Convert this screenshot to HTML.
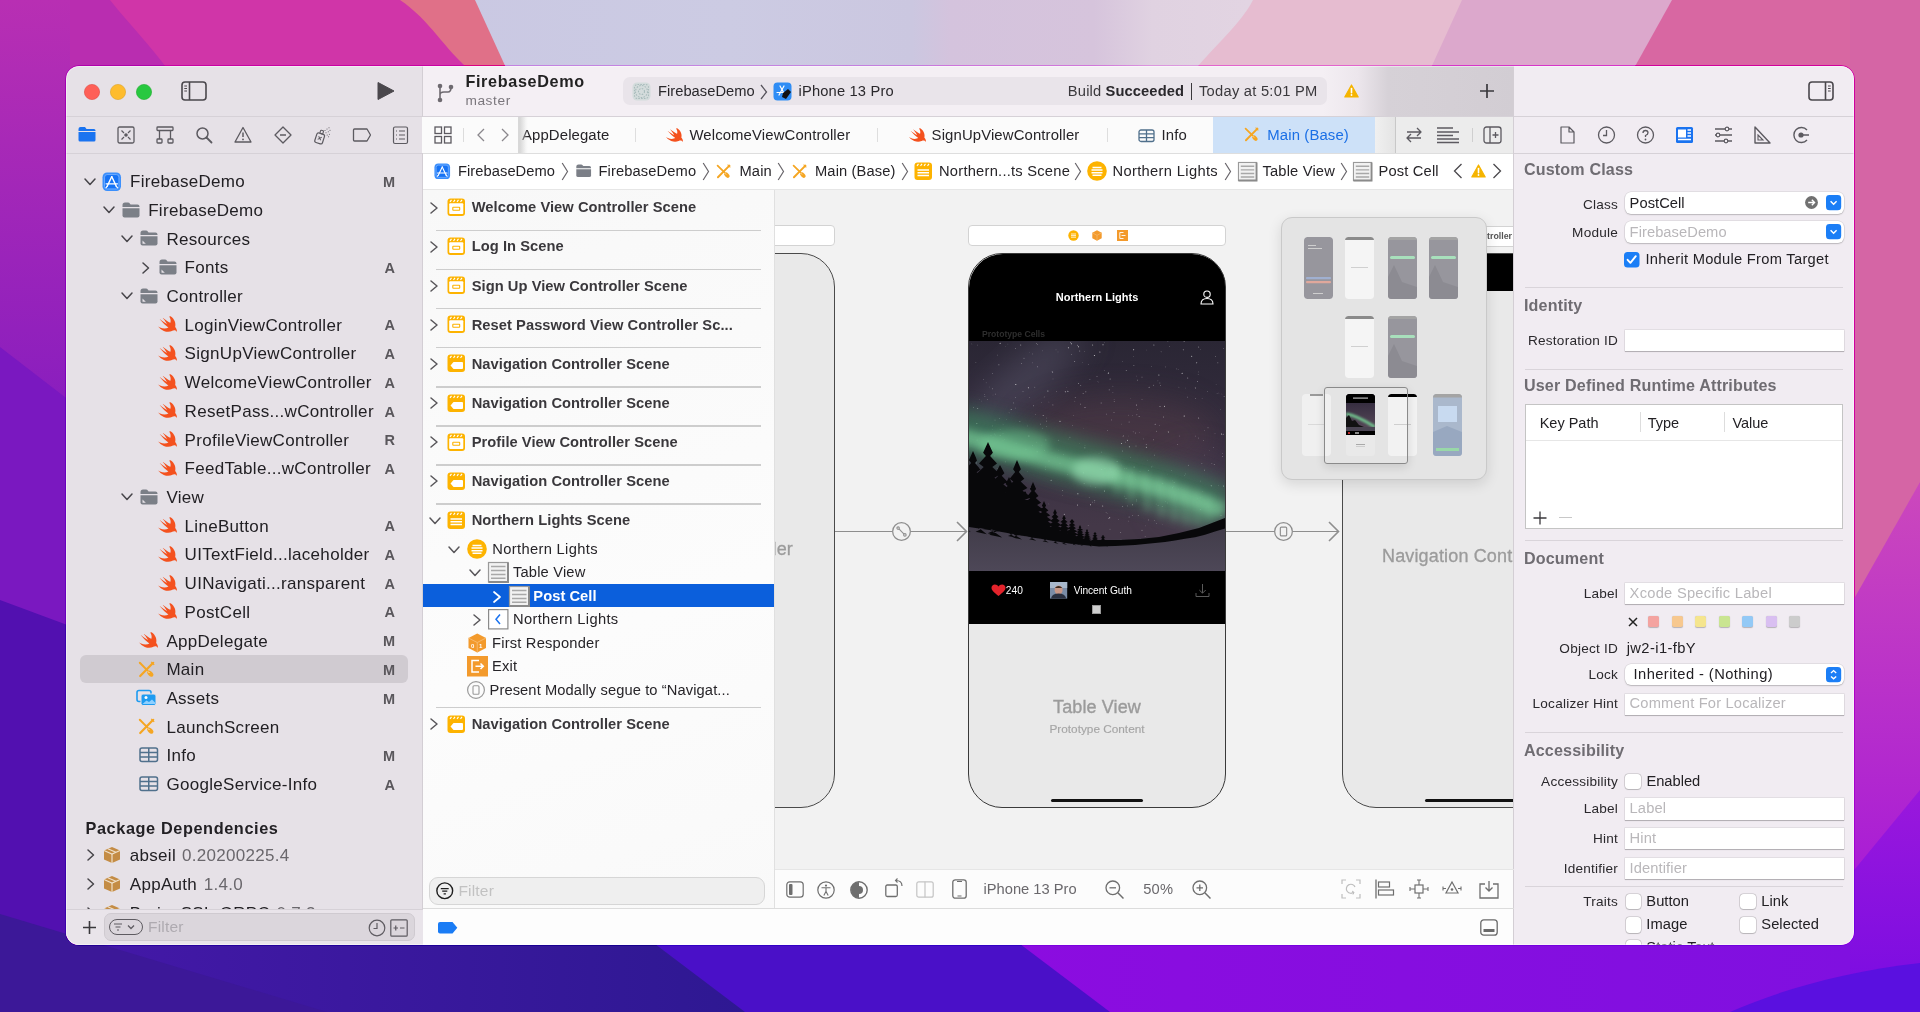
<!DOCTYPE html>
<html><head><meta charset="utf-8"><style>
html,body{margin:0;padding:0}
body{width:1920px;height:1012px;overflow:hidden;position:relative;font-family:"Liberation Sans", sans-serif;}
svg{display:block;overflow:visible}
</style></head><body>
<svg width="1920" height="1012" style="position:absolute;left:0;top:0">
<defs>
<linearGradient id="gl" gradientUnits="userSpaceOnUse" x1="0" y1="0" x2="0" y2="400"><stop offset="0" stop-color="#b82fb3"/><stop offset="1" stop-color="#8a1ebe"/></linearGradient>
<linearGradient id="gr" gradientUnits="userSpaceOnUse" x1="0" y1="482" x2="0" y2="880"><stop offset="0" stop-color="#cc48bc"/><stop offset="1" stop-color="#a81cd6"/></linearGradient><linearGradient id="gv2" gradientUnits="userSpaceOnUse" x1="0" y1="790" x2="0" y2="1000"><stop offset="0" stop-color="#9a18dc"/><stop offset="1" stop-color="#7a0ce2"/></linearGradient>
<linearGradient id="gb" x1="0" y1="0" x2="1" y2="0"><stop offset="0" stop-color="#4418a8"/><stop offset="1" stop-color="#2e1892"/></linearGradient>
<linearGradient id="gv" x1="0" y1="0" x2="1" y2="0"><stop offset="0" stop-color="#7a08e0"/><stop offset="0.5" stop-color="#8c0ce0"/><stop offset="1" stop-color="#8010e0"/></linearGradient>
<linearGradient id="gt" x1="0" y1="0" x2="1" y2="0"><stop offset="0" stop-color="#c6c4e2"/><stop offset="0.38" stop-color="#cccbe3"/><stop offset="0.475" stop-color="#cbc7e0"/><stop offset="0.495" stop-color="#d4c3dd"/><stop offset="0.57" stop-color="#d6c4dc"/><stop offset="0.6" stop-color="#e0d2e1"/><stop offset="0.65" stop-color="#e2d4e2"/><stop offset="1" stop-color="#e0d0e0"/></linearGradient>
</defs>
<rect x="0" y="0" width="1920" height="1012" fill="#8a10e0"/>
<rect x="0" y="0" width="1920" height="70" fill="url(#gt)"/>
<polygon points="0,0 475,0 507,70 0,70" fill="#e07088"/>
<path d="M0,0 L400,0 C430,20 445,50 470,70 L0,70 Z" fill="#d035a8"/>
<path d="M0,0 L110,0 C130,25 150,45 168,70 L0,70 Z" fill="#b92db0"/>
<path d="M1253,0 L1920,0 L1920,70 L1195,70 C1215,45 1240,25 1253,0 Z" fill="#e6bcd0"/>
<polygon points="1462,0 1920,0 1920,70 1430,70" fill="#dca8cc"/>
<polygon points="1672,0 1920,0 1920,70 1633,70" fill="#d867a2"/>
<rect x="0" y="0" width="70" height="1012" fill="url(#gl)"/>
<polygon points="0,347 70,401 70,1012 0,1012" fill="#7a18c0"/>
<polygon points="0,600 70,626 70,1012 0,1012" fill="#5210b0"/>

<rect x="1850" y="0" width="70" height="1012" fill="#d565a5"/>
<polygon points="1920,482 1850,606 1850,1012 1920,1012" fill="url(#gr)"/>
<polygon points="1920,790 1850,875 1850,1012 1920,1012" fill="url(#gv2)"/>

<rect x="70" y="944" width="1780" height="68" fill="url(#gv)"/>
<polygon points="70,944 1020,944 1110,1012 70,1012" fill="#4a10c8"/>
<polygon points="70,944 655,944 745,1012 70,1012" fill="url(#gb)"/>
<polygon points="0,914 327,1012 0,1012" fill="#3c1898"/>
<path d="M1920,963 C1840,972 1775,992 1730,1012 L1920,1012 Z" fill="#5a10e0"/>
</svg><div style="position:absolute;left:0;top:0;width:1920px;height:1012px;clip-path:inset(66px 66px 67px 66px round 13px)"><div style="position:absolute;left:66px;top:66px;width:357px;height:879px;background:#e6e1e7"></div><div style="position:absolute;left:423px;top:66px;width:1091px;height:50px;background:linear-gradient(90deg,#f4eff4 0,#f4eff4 900px,#ece6ec 935px,#d6d1d7 965px,#d2cdd3 100%)"></div><div style="position:absolute;left:1514px;top:66px;width:340px;height:879px;background:#f1ecf2"></div><div style="position:absolute;left:423px;top:117px;width:1091px;height:36px;background:#fbfbfb"></div><div style="position:absolute;left:423px;top:154px;width:1091px;height:35px;background:#ffffff"></div><div style="position:absolute;left:423px;top:190px;width:351px;height:718px;background:linear-gradient(160deg,#f8f8f8,#fcfcfc 60%,#f9f9f9)"></div><div style="position:absolute;left:775px;top:190px;width:739px;height:679px;background:#f2f2f2"></div><div style="position:absolute;left:775px;top:870px;width:739px;height:38px;background:#fcfcfc"></div><div style="position:absolute;left:423px;top:909px;width:1091px;height:36px;background:#fdfdfd"></div><div style="position:absolute;left:66px;top:910px;width:357px;height:35px;background:#e9e4ea"></div><div style="position:absolute;left:66px;top:116px;width:1788px;height:1px;background:#d6d1d7"></div><div style="position:absolute;left:66px;top:153px;width:357px;height:1px;background:#d6d1d7"></div><div style="position:absolute;left:1514px;top:153px;width:340px;height:1px;background:#d6d1d7"></div><div style="position:absolute;left:423px;top:153px;width:1091px;height:1px;background:#dedede"></div><div style="position:absolute;left:423px;top:189px;width:1091px;height:1px;background:#e6e6e6"></div><div style="position:absolute;left:422px;top:66px;width:1px;height:879px;background:#d3ced4"></div><div style="position:absolute;left:1513px;top:66px;width:1px;height:879px;background:#d3ced4"></div><div style="position:absolute;left:774px;top:190px;width:1px;height:718px;background:#e0e0e0"></div><div style="position:absolute;left:775px;top:869px;width:739px;height:1px;background:#e6e6e6"></div><div style="position:absolute;left:423px;top:908px;width:1091px;height:1px;background:#dcdcdc"></div><div style="position:absolute;left:66px;top:909px;width:357px;height:1px;background:#d6d1d7"></div><svg style="position:absolute;left:83.5px;top:83.5px;" width="16" height="16" viewBox="0 0 16 16"><circle cx="8" cy="8" r="7.6" fill="#fe5f57" stroke="#e0443e" stroke-width="0.6"/></svg><svg style="position:absolute;left:109.5px;top:83.5px;" width="16" height="16" viewBox="0 0 16 16"><circle cx="8" cy="8" r="7.6" fill="#febc2e" stroke="#dea123" stroke-width="0.6"/></svg><svg style="position:absolute;left:135.5px;top:83.5px;" width="16" height="16" viewBox="0 0 16 16"><circle cx="8" cy="8" r="7.6" fill="#28c840" stroke="#1dad2b" stroke-width="0.6"/></svg><svg style="position:absolute;left:181px;top:81px;" width="26" height="20" viewBox="0 0 26 20"><rect x="1" y="1" width="24" height="18" rx="3" fill="none" stroke="#4a474c" stroke-width="1.6"/><path d="M8.5,1 L8.5,19" stroke="#4a474c" stroke-width="1.6"/><path d="M3.3,5 L6,5 M3.3,7.5 L6,7.5 M3.3,10 L6,10" stroke="#4a474c" stroke-width="1"/></svg><svg style="position:absolute;left:376px;top:81px;" width="20" height="20" viewBox="0 0 20 20"><path d="M2,1.5 L18,10 L2,18.5 Z" fill="#4a474c" stroke="#4a474c" stroke-width="1" stroke-linejoin="round"/></svg><svg style="position:absolute;left:435px;top:81px;" width="20" height="22" viewBox="0 0 20 22"><g fill="#6e6a70"><circle cx="5" cy="5" r="2.3"/><circle cx="5" cy="19" r="2.3"/><circle cx="16" cy="6" r="2.3"/></g><path d="M5,5 L5,19 M5,14 Q5,11 9,11 L13,11 Q16,11 16,6" fill="none" stroke="#6e6a70" stroke-width="1.6"/></svg><div style="position:absolute;left:465.4px;top:72.94px;font-size:16.2px;line-height:16.2px;color:#222;font-weight:bold;letter-spacing:0.66px;white-space:nowrap;">FirebaseDemo</div><div style="position:absolute;left:465.4px;top:93.80px;font-size:13.7px;line-height:13.7px;color:#7a767c;font-weight:normal;letter-spacing:0.6px;white-space:nowrap;">master</div><div style="position:absolute;left:622.5px;top:77.2px;width:704px;height:28px;background:#e9e4ea;border-radius:7px"></div><svg style="position:absolute;left:632px;top:82px;" width="19" height="19" viewBox="0 0 19 19"><rect x="0.5" y="0.5" width="18" height="18" rx="4.5" fill="#d4dcdc"/><g fill="none" stroke="#a9bcbc" stroke-width="1.1" stroke-dasharray="1.6 1.2"><circle cx="9.5" cy="9.5" r="3"/><circle cx="9.5" cy="9.5" r="6"/><rect x="2.5" y="2.5" width="14" height="14" rx="3"/></g></svg><div style="position:absolute;left:657.9px;top:83.86px;font-size:14.7px;line-height:14.7px;color:#2a282c;font-weight:normal;letter-spacing:0.05px;white-space:nowrap;">FirebaseDemo</div><svg style="position:absolute;left:760px;top:84px;" width="8" height="16" viewBox="0 0 8 16"><path d="M1,1 L6.5,8 L1,15" fill="none" stroke="#55525a" stroke-width="1.3"/></svg><svg style="position:absolute;left:773px;top:82px;" width="20" height="19" viewBox="0 0 20 19"><rect x="0.5" y="0.5" width="18" height="18" rx="4" fill="#2f8df5"/><g stroke="#fff" stroke-width="1.2" stroke-linecap="round"><path d="M7,4 L12,13"/><path d="M11,4 L6,13"/><path d="M4,10.5 L14,10.5"/></g><path d="M10,11 L15,7 L18,10 L13,17 L9,15 Z" fill="#111"/></svg><div style="position:absolute;left:798.5px;top:83.86px;font-size:14.7px;line-height:14.7px;color:#2a282c;font-weight:normal;letter-spacing:0.17px;white-space:nowrap;">iPhone 13 Pro</div><div style="position:absolute;left:1067.8px;top:83.86px;font-size:14.7px;line-height:14.7px;color:#3a383c;font-weight:normal;letter-spacing:0.2px;white-space:nowrap;">Build</div><div style="position:absolute;left:1105.6px;top:83.86px;font-size:14.7px;line-height:14.7px;color:#2a282c;font-weight:bold;letter-spacing:0.1px;white-space:nowrap;">Succeeded</div><div style="position:absolute;left:1191px;top:83px;width:1.3px;height:17px;background:#3a383c"></div><div style="position:absolute;left:1199px;top:83.86px;font-size:14.7px;line-height:14.7px;color:#3a383c;font-weight:normal;letter-spacing:0.26px;white-space:nowrap;">Today at 5:01 PM</div><svg style="position:absolute;left:1344px;top:83.5px;" width="15" height="14" viewBox="0 0 15 14"><path d="M7.5,1 L14.2,13 L0.8,13 Z" fill="#f5b400" stroke="#f5b400" stroke-width="1.2" stroke-linejoin="round"/><path d="M7.5,4.5 L7.5,8.8" stroke="#fff" stroke-width="1.6" stroke-linecap="round"/><circle cx="7.5" cy="11" r="0.9" fill="#fff"/></svg><svg style="position:absolute;left:1479px;top:83px;" width="16" height="16" viewBox="0 0 16 16"><path d="M8,1 L8,15 M1,8 L15,8" stroke="#3a383c" stroke-width="1.7"/></svg><svg style="position:absolute;left:1808px;top:81px;" width="26" height="20" viewBox="0 0 26 20"><rect x="1" y="1" width="24" height="18" rx="3" fill="none" stroke="#4a474c" stroke-width="1.6"/><path d="M17.5,1 L17.5,19" stroke="#4a474c" stroke-width="1.6"/><path d="M20,5 L22.7,5 M20,7.5 L22.7,7.5 M20,10 L22.7,10" stroke="#4a474c" stroke-width="1"/></svg><svg style="position:absolute;left:78.0px;top:126px;" width="19" height="18" viewBox="0 0 19 18"><path d="M0.5,3 Q0.5,1 2.5,1 L7,1 L8.5,3 L16,3 Q17.5,3 17.5,4.5 L17.5,5 L0.5,5 Z M0.5,6 L17.5,6 L17.5,14 Q17.5,15.5 16,15.5 L2,15.5 Q0.5,15.5 0.5,14 Z" fill="#1a73f0"/></svg><svg style="position:absolute;left:117.1px;top:126px;" width="19" height="18" viewBox="0 0 19 18"><rect x="1" y="1" width="16" height="16" rx="1.5" fill="none" stroke="#5c5a60" stroke-width="1.3"/><circle cx="9" cy="9" r="1.8" fill="#5c5a60"/><path d="M4.5,4.5 L7,7 M13.5,4.5 L11,7 M4.5,13.5 L7,11 M13.5,13.5 L11,11" stroke="#5c5a60" stroke-width="1.2"/></svg><svg style="position:absolute;left:156.2px;top:126px;" width="19" height="18" viewBox="0 0 19 18"><rect x="1" y="1" width="16" height="3.5" rx="0.8" fill="none" stroke="#5c5a60" stroke-width="1.3"/><rect x="1" y="13" width="5" height="4" rx="0.8" fill="none" stroke="#5c5a60" stroke-width="1.3"/><rect x="12" y="13" width="5" height="4" rx="0.8" fill="none" stroke="#5c5a60" stroke-width="1.3"/><path d="M3.5,4.5 L3.5,13 M14.5,4.5 L14.5,13" stroke="#5c5a60" stroke-width="1.3"/></svg><svg style="position:absolute;left:195.3px;top:126px;" width="19" height="18" viewBox="0 0 19 18"><circle cx="7.5" cy="7.5" r="5.5" fill="none" stroke="#5c5a60" stroke-width="1.5"/><path d="M11.5,11.5 L16.5,16.5" stroke="#5c5a60" stroke-width="1.8" stroke-linecap="round"/></svg><svg style="position:absolute;left:234.4px;top:126px;" width="19" height="18" viewBox="0 0 19 18"><path d="M9,1.5 L17,16 L1,16 Z" fill="none" stroke="#5c5a60" stroke-width="1.3" stroke-linejoin="round"/><path d="M9,6.5 L9,11" stroke="#5c5a60" stroke-width="1.5"/><circle cx="9" cy="13.4" r="0.9" fill="#5c5a60"/></svg><svg style="position:absolute;left:273.5px;top:126px;" width="19" height="18" viewBox="0 0 19 18"><path d="M9,1 L17,9 L9,17 L1,9 Z" fill="none" stroke="#5c5a60" stroke-width="1.3" stroke-linejoin="round"/><path d="M6,9 L12,9" stroke="#5c5a60" stroke-width="1.5"/></svg><svg style="position:absolute;left:312.6px;top:126px;" width="19" height="18" viewBox="0 0 19 18"><g transform="rotate(18 7 12)"><rect x="2.8" y="7.5" width="8" height="10" rx="1.8" fill="none" stroke="#5c5a60" stroke-width="1.2"/><rect x="5.3" y="4.2" width="3" height="3.3" rx="0.6" fill="none" stroke="#5c5a60" stroke-width="1.1"/><path d="M5.2,10.8 L8.4,14 M8.4,10.8 L5.2,14" stroke="#5c5a60" stroke-width="1"/></g><g fill="#5c5a60"><circle cx="12" cy="4.5" r="0.55"/><circle cx="14" cy="3" r="0.55"/><circle cx="16" cy="1.8" r="0.55"/><circle cx="13" cy="6.8" r="0.55"/><circle cx="15.3" cy="5.8" r="0.55"/><circle cx="17" cy="4.2" r="0.55"/><circle cx="14.2" cy="9" r="0.55"/><circle cx="16.4" cy="8.2" r="0.55"/><circle cx="15.6" cy="10.8" r="0.55"/></g></svg><svg style="position:absolute;left:351.7px;top:126px;" width="19" height="18" viewBox="0 0 19 18"><path d="M1.5,4 Q1.5,3 2.5,3 L15,3 L18.5,9 L15,15 L2.5,15 Q1.5,15 1.5,14 Z" fill="none" stroke="#5c5a60" stroke-width="1.3" stroke-linejoin="round"/></svg><svg style="position:absolute;left:390.8px;top:126px;" width="19" height="18" viewBox="0 0 19 18"><rect x="2.5" y="1" width="14" height="16.5" rx="1.5" fill="none" stroke="#5c5a60" stroke-width="1.2"/><path d="M5,5 L6,5 M8,5 L14,5 M5,9 L6,9 M8,9 L14,9 M5,13 L6,13 M8,13 L14,13" stroke="#5c5a60" stroke-width="1.2"/></svg><svg style="position:absolute;left:434px;top:126px;" width="18" height="18" viewBox="0 0 18 18"><g fill="none" stroke="#5c5a60" stroke-width="1.3"><rect x="1" y="1" width="6.5" height="6.5"/><rect x="10.5" y="1" width="6.5" height="6.5"/><rect x="1" y="10.5" width="6.5" height="6.5"/><rect x="10.5" y="10.5" width="6.5" height="6.5"/></g></svg><div style="position:absolute;left:463px;top:128px;width:1px;height:14px;background:#dcdcdc"></div><svg style="position:absolute;left:476px;top:129px;" width="8" height="14" viewBox="0 0 8 14"><path d="M1,1 L7,7.0 L1,13" fill="none" stroke="#8a878c" stroke-width="1.3" stroke-linecap="round" stroke-linejoin="round"/></svg><svg style="position:absolute;left:502px;top:129px;" width="8" height="14" viewBox="0 0 8 14"><path d="M1,1 L7,7.0 L1,13" fill="none" stroke="#8a878c" stroke-width="1.3" stroke-linecap="round" stroke-linejoin="round"/></svg><div style="position:absolute;left:522px;top:127.59px;font-size:14.9px;line-height:14.9px;color:#262428;font-weight:normal;letter-spacing:0.12px;white-space:nowrap;">AppDelegate</div><div style="position:absolute;left:518px;top:117px;width:10px;height:36px;background:linear-gradient(90deg,#e0e0e0,rgba(251,251,251,0))"></div><div style="position:absolute;left:422px;top:117px;width:97px;height:36px;background:#fbfbfb"></div><svg style="position:absolute;left:434px;top:126px;" width="18" height="18" viewBox="0 0 18 18"><g fill="none" stroke="#5c5a60" stroke-width="1.3"><rect x="1" y="1" width="6.5" height="6.5"/><rect x="10.5" y="1" width="6.5" height="6.5"/><rect x="1" y="10.5" width="6.5" height="6.5"/><rect x="10.5" y="10.5" width="6.5" height="6.5"/></g></svg><div style="position:absolute;left:463px;top:128px;width:1px;height:14px;background:#dcdcdc"></div><svg style="position:absolute;left:476px;top:128px;" width="10" height="14" viewBox="0 0 10 14"><path d="M8,1 L2,7 L8,13" fill="none" stroke="#8a878c" stroke-width="1.3"/></svg><svg style="position:absolute;left:500px;top:128px;" width="10" height="14" viewBox="0 0 10 14"><path d="M2,1 L8,7 L2,13" fill="none" stroke="#8a878c" stroke-width="1.3"/></svg><div style="position:absolute;left:518px;top:117px;width:1.5px;height:36px;background:#d8d8d8"></div><div style="position:absolute;left:519.5px;top:117px;width:6px;height:36px;background:linear-gradient(90deg,rgba(0,0,0,0.06),rgba(0,0,0,0))"></div><div style="position:absolute;left:634.5px;top:128px;width:1px;height:14px;background:#dedede"></div><div style="position:absolute;left:877.3px;top:128px;width:1px;height:14px;background:#dedede"></div><div style="position:absolute;left:1107px;top:128px;width:1px;height:14px;background:#dedede"></div><svg style="position:absolute;left:666px;top:128px;" width="17" height="14" preserveAspectRatio="none" viewBox="2 3 17.5 16.3"><path d="M13.543 3.203c3.812 2.594 5.156 7.545 4.258 11.016.047.07.103.145.15.215 2.014 2.508 1.46 5.156 1.21 4.672-1.05-2.046-2.99-1.53-3.977-1.014-.09.047-.18.094-.27.141l-.02.02c-2.04 1.08-4.77 1.17-7.525-.012a12.085 12.085 0 0 1-5.477-4.678c.63.467 1.305.873 2.004 1.215 2.85 1.332 5.686 1.229 7.686.004-2.84-2.193-5.265-5.061-7.059-7.37-.375-.378-.655-.85-.934-1.28 2.15 1.967 5.561 4.448 6.79 5.138C8.822 8.298 6.503 4.898 5.82 4.24c2.148 1.896 5.156 4.35 7.365 5.595.045.024.097.056.143.076.045-.129.09-.26.127-.389.52-1.86.074-3.97-1.158-5.943z" fill="#f4511e"/></svg><div style="position:absolute;left:689.4px;top:127.59px;font-size:14.9px;line-height:14.9px;color:#262428;font-weight:normal;letter-spacing:0.12px;white-space:nowrap;">WelcomeViewController</div><svg style="position:absolute;left:909px;top:128px;" width="17" height="14" preserveAspectRatio="none" viewBox="2 3 17.5 16.3"><path d="M13.543 3.203c3.812 2.594 5.156 7.545 4.258 11.016.047.07.103.145.15.215 2.014 2.508 1.46 5.156 1.21 4.672-1.05-2.046-2.99-1.53-3.977-1.014-.09.047-.18.094-.27.141l-.02.02c-2.04 1.08-4.77 1.17-7.525-.012a12.085 12.085 0 0 1-5.477-4.678c.63.467 1.305.873 2.004 1.215 2.85 1.332 5.686 1.229 7.686.004-2.84-2.193-5.265-5.061-7.059-7.37-.375-.378-.655-.85-.934-1.28 2.15 1.967 5.561 4.448 6.79 5.138C8.822 8.298 6.503 4.898 5.82 4.24c2.148 1.896 5.156 4.35 7.365 5.595.045.024.097.056.143.076.045-.129.09-.26.127-.389.52-1.86.074-3.97-1.158-5.943z" fill="#f4511e"/></svg><div style="position:absolute;left:931.6px;top:127.59px;font-size:14.9px;line-height:14.9px;color:#262428;font-weight:normal;letter-spacing:0.12px;white-space:nowrap;">SignUpViewController</div><svg style="position:absolute;left:1138px;top:128.5px;" width="17" height="13.5" viewBox="0 0 17 13.5"><rect x="1" y="1" width="15" height="11.5" rx="2" fill="none" stroke="#50708c" stroke-width="1.3"/><path d="M1,4.83 L16,4.83 M1,8.67 L16,8.67 M8.50,1 L8.50,12.5" stroke="#50708c" stroke-width="1.3"/></svg><div style="position:absolute;left:1161.5px;top:127.59px;font-size:14.9px;line-height:14.9px;color:#262428;font-weight:normal;letter-spacing:0.12px;white-space:nowrap;">Info</div><div style="position:absolute;left:1213px;top:117px;width:161.5px;height:36px;background:#cde1f8"></div><svg style="position:absolute;left:1244px;top:127px;" width="15" height="15" viewBox="0 0 17 17"><path d="M1.8,1.8 L9.6,9.6" stroke="#f5a623" stroke-width="2" stroke-linecap="round"/><path d="M15.2,1.8 L2.2,15" stroke="#f5a623" stroke-width="2.2" stroke-linecap="round"/><path d="M13.2,0.8 L16.2,3.8" stroke="#f5a623" stroke-width="1.2"/><ellipse cx="12.3" cy="12.6" rx="3.6" ry="2.3" transform="rotate(45 12.3 12.6)" fill="#f5a623"/><path d="M10,10.5 L11.3,11.8" stroke="#fff" stroke-width="0.9"/></svg><div style="position:absolute;left:1267.3px;top:127.59px;font-size:14.9px;line-height:14.9px;color:#1a6fe6;font-weight:normal;letter-spacing:0.12px;white-space:nowrap;">Main (Base)</div><div style="position:absolute;left:1374.5px;top:117px;width:20.5px;height:36px;background:linear-gradient(90deg,#f0f0f0,#e4e4e4)"></div><div style="position:absolute;left:1394.5px;top:117px;width:1.3px;height:36px;background:#c8c8c8"></div><div style="position:absolute;left:1396px;top:117px;width:117px;height:36px;background:#ececec"></div><svg style="position:absolute;left:1405px;top:126px;" width="18" height="18" viewBox="0 0 18 18"><path d="M2,6 L16,6 M12,2 L16,6 L12,10 M16,12 L2,12 M6,8 L2,12 L6,16" fill="none" stroke="#5c5a60" stroke-width="1.3" stroke-linejoin="round"/></svg><svg style="position:absolute;left:1436px;top:126px;" width="24" height="18" viewBox="0 0 24 18"><path d="M1,2 L17,2 M1,6 L23,6 M1,9.5 L17,9.5 M1,13 L23,13 M1,16.5 L23,16.5" stroke="#5c5a60" stroke-width="1.3"/></svg><div style="position:absolute;left:1472px;top:128px;width:1px;height:14px;background:#cfcfcf"></div><svg style="position:absolute;left:1483px;top:126px;" width="19" height="18" viewBox="0 0 19 18"><rect x="1" y="1" width="17" height="16" rx="2.5" fill="none" stroke="#5c5a60" stroke-width="1.3"/><path d="M7,1 L7,17 M12.5,6 L12.5,12 M9.5,9 L15.5,9" stroke="#5c5a60" stroke-width="1.3"/></svg><svg style="position:absolute;left:1557.5px;top:126px;" width="19" height="18" viewBox="0 0 19 18"><path d="M3,1 L11,1 L16,6 L16,17 L3,17 Z M11,1 L11,6 L16,6" fill="none" stroke="#5c5a60" stroke-width="1.2" stroke-linejoin="round"/></svg><svg style="position:absolute;left:1596.5px;top:126px;" width="19" height="18" viewBox="0 0 19 18"><circle cx="9.5" cy="9" r="8" fill="none" stroke="#5c5a60" stroke-width="1.3"/><path d="M9.5,4 L9.5,9.5 L6,9.5" fill="none" stroke="#5c5a60" stroke-width="1.3"/></svg><svg style="position:absolute;left:1635.5px;top:126px;" width="19" height="18" viewBox="0 0 19 18"><circle cx="9.5" cy="9" r="8" fill="none" stroke="#5c5a60" stroke-width="1.3"/><path d="M7,7 Q7,4.5 9.5,4.5 Q12,4.5 12,6.8 Q12,8.5 9.5,9.5 L9.5,11" fill="none" stroke="#5c5a60" stroke-width="1.3"/><circle cx="9.5" cy="13.5" r="0.9" fill="#5c5a60"/></svg><svg style="position:absolute;left:1674.5px;top:126px;" width="19" height="18" viewBox="0 0 19 18"><rect x="1" y="1" width="17" height="16" rx="1.5" fill="#1a73f0"/><rect x="3" y="3.5" width="8" height="8" fill="#fff"/><path d="M12.5,4 L16,4 M12.5,7 L16,7 M12.5,10 L16,10 M3,13.5 L16,13.5" stroke="#fff" stroke-width="1.3"/></svg><svg style="position:absolute;left:1713.5px;top:126px;" width="19" height="18" viewBox="0 0 19 18"><path d="M1,3 L18,3 M1,9 L18,9 M1,15 L18,15" stroke="#5c5a60" stroke-width="1.3"/><g fill="#f1ecf2" stroke="#5c5a60" stroke-width="1.2"><circle cx="13" cy="3" r="1.8"/><circle cx="4" cy="9" r="1.8"/><circle cx="12" cy="15" r="1.8"/></g></svg><svg style="position:absolute;left:1752.5px;top:126px;" width="19" height="18" viewBox="0 0 19 18"><path d="M2,1 L17,17 L2,17 Z" fill="none" stroke="#5c5a60" stroke-width="1.4" stroke-linejoin="round"/><path d="M5,9 L10,14 L5,14 Z" fill="none" stroke="#5c5a60" stroke-width="1.1"/></svg><svg style="position:absolute;left:1791.5px;top:126px;" width="19" height="18" viewBox="0 0 19 18"><path d="M15,4 A7.5,7.5 0 1,0 15,14" fill="none" stroke="#5c5a60" stroke-width="1.4"/><circle cx="9" cy="9" r="2.6" fill="#5c5a60"/><path d="M9,9 L17,9" stroke="#5c5a60" stroke-width="1.4"/></svg><div style="position:absolute;left:80px;top:655px;width:328px;height:28px;background:#d0cbd1;border-radius:6px"></div><svg style="position:absolute;left:84.0px;top:177.5px;" width="12" height="7.5" viewBox="0 0 12 7.5"><path d="M1,1 L6.0,6.5 L11,1" fill="none" stroke="#47454a" stroke-width="1.5" stroke-linecap="round" stroke-linejoin="round"/></svg><svg style="position:absolute;left:102px;top:171.5px;" width="19.5" height="19.5" viewBox="0 0 19 19"><rect x="0.5" y="0.5" width="18" height="18" rx="4.5" fill="#3b8ffc"/><rect x="2.5" y="2.5" width="14" height="14" rx="2.5" fill="#1673f5" stroke="#7fb6ff" stroke-width="0.8"/><g stroke="#fff" stroke-width="1.3" stroke-linecap="round" fill="none"><path d="M9.5,4.5 L5,14"/><path d="M9.5,4.5 L14,14"/><path d="M4,11.5 L15,11.5"/><path d="M5,14 L4,15.2 M14,14 L15,15.2"/></g></svg><div style="position:absolute;left:130.0px;top:173.21px;font-size:17px;line-height:17px;color:#222024;font-weight:normal;letter-spacing:0.3px;white-space:nowrap;">FirebaseDemo</div><div style="position:absolute;right:1525px;top:174.83px;font-size:14.5px;line-height:14.5px;color:#5a575c;font-weight:bold;letter-spacing:0px;white-space:nowrap;">M</div><svg style="position:absolute;left:102.5px;top:206.21px;" width="12" height="7.5" viewBox="0 0 12 7.5"><path d="M1,1 L6.0,6.5 L11,1" fill="none" stroke="#47454a" stroke-width="1.5" stroke-linecap="round" stroke-linejoin="round"/></svg><svg style="position:absolute;left:120.5px;top:201.71px;" width="19" height="16" preserveAspectRatio="none" viewBox="0 0 19 16"><path d="M1.5,3 Q1.5,0.5 4,0.5 L7,0.5 Q8.2,0.5 9,1.8 L9.6,2.4 L16.5,2.4 Q18.5,2.4 18.5,4.5 L18.5,4.9 L1.5,4.9 Z" fill="#7b7f87"/><path d="M1.5,6.3 L18.5,6.3 L18.5,13.5 Q18.5,15.5 16.5,15.5 L3.5,15.5 Q1.5,15.5 1.5,13.5 Z" fill="#7b7f87"/></svg><div style="position:absolute;left:148.2px;top:201.92px;font-size:17px;line-height:17px;color:#222024;font-weight:normal;letter-spacing:0.3px;white-space:nowrap;">FirebaseDemo</div><svg style="position:absolute;left:121.0px;top:234.92000000000002px;" width="12" height="7.5" viewBox="0 0 12 7.5"><path d="M1,1 L6.0,6.5 L11,1" fill="none" stroke="#47454a" stroke-width="1.5" stroke-linecap="round" stroke-linejoin="round"/></svg><svg style="position:absolute;left:139.0px;top:230.42000000000002px;" width="19" height="16" preserveAspectRatio="none" viewBox="0 0 19 16"><path d="M1.5,3 Q1.5,0.5 4,0.5 L7,0.5 Q8.2,0.5 9,1.8 L9.6,2.4 L16.5,2.4 Q18.5,2.4 18.5,4.5 L18.5,4.9 L1.5,4.9 Z" fill="#7b7f87"/><path d="M1.5,6.3 L18.5,6.3 L18.5,13.5 Q18.5,15.5 16.5,15.5 L3.5,15.5 Q1.5,15.5 1.5,13.5 Z" fill="#7b7f87"/><path d="M3.5,10.5 L6.8,13.8 L3.5,13.8 Z" fill="#e6e1e7"/></svg><div style="position:absolute;left:166.4px;top:230.63px;font-size:17px;line-height:17px;color:#222024;font-weight:normal;letter-spacing:0.3px;white-space:nowrap;">Resources</div><svg style="position:absolute;left:142px;top:261.63px;" width="7.5" height="12" viewBox="0 0 7.5 12"><path d="M1,1 L6.5,6.0 L1,11" fill="none" stroke="#47454a" stroke-width="1.5" stroke-linecap="round" stroke-linejoin="round"/></svg><svg style="position:absolute;left:157.5px;top:259.13px;" width="19" height="16" preserveAspectRatio="none" viewBox="0 0 19 16"><path d="M1.5,3 Q1.5,0.5 4,0.5 L7,0.5 Q8.2,0.5 9,1.8 L9.6,2.4 L16.5,2.4 Q18.5,2.4 18.5,4.5 L18.5,4.9 L1.5,4.9 Z" fill="#7b7f87"/><path d="M1.5,6.3 L18.5,6.3 L18.5,13.5 Q18.5,15.5 16.5,15.5 L3.5,15.5 Q1.5,15.5 1.5,13.5 Z" fill="#7b7f87"/><path d="M3.5,10.5 L6.8,13.8 L3.5,13.8 Z" fill="#e6e1e7"/></svg><div style="position:absolute;left:184.6px;top:259.34px;font-size:17px;line-height:17px;color:#222024;font-weight:normal;letter-spacing:0.3px;white-space:nowrap;">Fonts</div><div style="position:absolute;right:1525px;top:260.96px;font-size:14.5px;line-height:14.5px;color:#5a575c;font-weight:bold;letter-spacing:0px;white-space:nowrap;">A</div><svg style="position:absolute;left:121.0px;top:292.34000000000003px;" width="12" height="7.5" viewBox="0 0 12 7.5"><path d="M1,1 L6.0,6.5 L11,1" fill="none" stroke="#47454a" stroke-width="1.5" stroke-linecap="round" stroke-linejoin="round"/></svg><svg style="position:absolute;left:139.0px;top:287.84000000000003px;" width="19" height="16" preserveAspectRatio="none" viewBox="0 0 19 16"><path d="M1.5,3 Q1.5,0.5 4,0.5 L7,0.5 Q8.2,0.5 9,1.8 L9.6,2.4 L16.5,2.4 Q18.5,2.4 18.5,4.5 L18.5,4.9 L1.5,4.9 Z" fill="#7b7f87"/><path d="M1.5,6.3 L18.5,6.3 L18.5,13.5 Q18.5,15.5 16.5,15.5 L3.5,15.5 Q1.5,15.5 1.5,13.5 Z" fill="#7b7f87"/><path d="M3.5,10.5 L6.8,13.8 L3.5,13.8 Z" fill="#e6e1e7"/></svg><div style="position:absolute;left:166.4px;top:288.05px;font-size:17px;line-height:17px;color:#222024;font-weight:normal;letter-spacing:0.3px;white-space:nowrap;">Controller</div><svg style="position:absolute;left:157.5px;top:316.25px;" width="19" height="16" preserveAspectRatio="none" viewBox="2 3 17.5 16.3"><path d="M13.543 3.203c3.812 2.594 5.156 7.545 4.258 11.016.047.07.103.145.15.215 2.014 2.508 1.46 5.156 1.21 4.672-1.05-2.046-2.99-1.53-3.977-1.014-.09.047-.18.094-.27.141l-.02.02c-2.04 1.08-4.77 1.17-7.525-.012a12.085 12.085 0 0 1-5.477-4.678c.63.467 1.305.873 2.004 1.215 2.85 1.332 5.686 1.229 7.686.004-2.84-2.193-5.265-5.061-7.059-7.37-.375-.378-.655-.85-.934-1.28 2.15 1.967 5.561 4.448 6.79 5.138C8.822 8.298 6.503 4.898 5.82 4.24c2.148 1.896 5.156 4.35 7.365 5.595.045.024.097.056.143.076.045-.129.09-.26.127-.389.52-1.86.074-3.97-1.158-5.943z" fill="#f4511e"/></svg><div style="position:absolute;left:184.6px;top:316.76px;font-size:17px;line-height:17px;color:#222024;font-weight:normal;letter-spacing:0.3px;white-space:nowrap;">LoginViewController</div><div style="position:absolute;right:1525px;top:318.38px;font-size:14.5px;line-height:14.5px;color:#5a575c;font-weight:bold;letter-spacing:0px;white-space:nowrap;">A</div><svg style="position:absolute;left:157.5px;top:344.96px;" width="19" height="16" preserveAspectRatio="none" viewBox="2 3 17.5 16.3"><path d="M13.543 3.203c3.812 2.594 5.156 7.545 4.258 11.016.047.07.103.145.15.215 2.014 2.508 1.46 5.156 1.21 4.672-1.05-2.046-2.99-1.53-3.977-1.014-.09.047-.18.094-.27.141l-.02.02c-2.04 1.08-4.77 1.17-7.525-.012a12.085 12.085 0 0 1-5.477-4.678c.63.467 1.305.873 2.004 1.215 2.85 1.332 5.686 1.229 7.686.004-2.84-2.193-5.265-5.061-7.059-7.37-.375-.378-.655-.85-.934-1.28 2.15 1.967 5.561 4.448 6.79 5.138C8.822 8.298 6.503 4.898 5.82 4.24c2.148 1.896 5.156 4.35 7.365 5.595.045.024.097.056.143.076.045-.129.09-.26.127-.389.52-1.86.074-3.97-1.158-5.943z" fill="#f4511e"/></svg><div style="position:absolute;left:184.6px;top:345.47px;font-size:17px;line-height:17px;color:#222024;font-weight:normal;letter-spacing:0.3px;white-space:nowrap;">SignUpViewController</div><div style="position:absolute;right:1525px;top:347.09px;font-size:14.5px;line-height:14.5px;color:#5a575c;font-weight:bold;letter-spacing:0px;white-space:nowrap;">A</div><svg style="position:absolute;left:157.5px;top:373.67px;" width="19" height="16" preserveAspectRatio="none" viewBox="2 3 17.5 16.3"><path d="M13.543 3.203c3.812 2.594 5.156 7.545 4.258 11.016.047.07.103.145.15.215 2.014 2.508 1.46 5.156 1.21 4.672-1.05-2.046-2.99-1.53-3.977-1.014-.09.047-.18.094-.27.141l-.02.02c-2.04 1.08-4.77 1.17-7.525-.012a12.085 12.085 0 0 1-5.477-4.678c.63.467 1.305.873 2.004 1.215 2.85 1.332 5.686 1.229 7.686.004-2.84-2.193-5.265-5.061-7.059-7.37-.375-.378-.655-.85-.934-1.28 2.15 1.967 5.561 4.448 6.79 5.138C8.822 8.298 6.503 4.898 5.82 4.24c2.148 1.896 5.156 4.35 7.365 5.595.045.024.097.056.143.076.045-.129.09-.26.127-.389.52-1.86.074-3.97-1.158-5.943z" fill="#f4511e"/></svg><div style="position:absolute;left:184.6px;top:374.18px;font-size:17px;line-height:17px;color:#222024;font-weight:normal;letter-spacing:0.3px;white-space:nowrap;">WelcomeViewController</div><div style="position:absolute;right:1525px;top:375.80px;font-size:14.5px;line-height:14.5px;color:#5a575c;font-weight:bold;letter-spacing:0px;white-space:nowrap;">A</div><svg style="position:absolute;left:157.5px;top:402.38px;" width="19" height="16" preserveAspectRatio="none" viewBox="2 3 17.5 16.3"><path d="M13.543 3.203c3.812 2.594 5.156 7.545 4.258 11.016.047.07.103.145.15.215 2.014 2.508 1.46 5.156 1.21 4.672-1.05-2.046-2.99-1.53-3.977-1.014-.09.047-.18.094-.27.141l-.02.02c-2.04 1.08-4.77 1.17-7.525-.012a12.085 12.085 0 0 1-5.477-4.678c.63.467 1.305.873 2.004 1.215 2.85 1.332 5.686 1.229 7.686.004-2.84-2.193-5.265-5.061-7.059-7.37-.375-.378-.655-.85-.934-1.28 2.15 1.967 5.561 4.448 6.79 5.138C8.822 8.298 6.503 4.898 5.82 4.24c2.148 1.896 5.156 4.35 7.365 5.595.045.024.097.056.143.076.045-.129.09-.26.127-.389.52-1.86.074-3.97-1.158-5.943z" fill="#f4511e"/></svg><div style="position:absolute;left:184.6px;top:402.89px;font-size:17px;line-height:17px;color:#222024;font-weight:normal;letter-spacing:0.3px;white-space:nowrap;">ResetPass...wController</div><div style="position:absolute;right:1525px;top:404.51px;font-size:14.5px;line-height:14.5px;color:#5a575c;font-weight:bold;letter-spacing:0px;white-space:nowrap;">A</div><svg style="position:absolute;left:157.5px;top:431.09px;" width="19" height="16" preserveAspectRatio="none" viewBox="2 3 17.5 16.3"><path d="M13.543 3.203c3.812 2.594 5.156 7.545 4.258 11.016.047.07.103.145.15.215 2.014 2.508 1.46 5.156 1.21 4.672-1.05-2.046-2.99-1.53-3.977-1.014-.09.047-.18.094-.27.141l-.02.02c-2.04 1.08-4.77 1.17-7.525-.012a12.085 12.085 0 0 1-5.477-4.678c.63.467 1.305.873 2.004 1.215 2.85 1.332 5.686 1.229 7.686.004-2.84-2.193-5.265-5.061-7.059-7.37-.375-.378-.655-.85-.934-1.28 2.15 1.967 5.561 4.448 6.79 5.138C8.822 8.298 6.503 4.898 5.82 4.24c2.148 1.896 5.156 4.35 7.365 5.595.045.024.097.056.143.076.045-.129.09-.26.127-.389.52-1.86.074-3.97-1.158-5.943z" fill="#f4511e"/></svg><div style="position:absolute;left:184.6px;top:431.60px;font-size:17px;line-height:17px;color:#222024;font-weight:normal;letter-spacing:0.3px;white-space:nowrap;">ProfileViewController</div><div style="position:absolute;right:1525px;top:433.22px;font-size:14.5px;line-height:14.5px;color:#5a575c;font-weight:bold;letter-spacing:0px;white-space:nowrap;">R</div><svg style="position:absolute;left:157.5px;top:459.8px;" width="19" height="16" preserveAspectRatio="none" viewBox="2 3 17.5 16.3"><path d="M13.543 3.203c3.812 2.594 5.156 7.545 4.258 11.016.047.07.103.145.15.215 2.014 2.508 1.46 5.156 1.21 4.672-1.05-2.046-2.99-1.53-3.977-1.014-.09.047-.18.094-.27.141l-.02.02c-2.04 1.08-4.77 1.17-7.525-.012a12.085 12.085 0 0 1-5.477-4.678c.63.467 1.305.873 2.004 1.215 2.85 1.332 5.686 1.229 7.686.004-2.84-2.193-5.265-5.061-7.059-7.37-.375-.378-.655-.85-.934-1.28 2.15 1.967 5.561 4.448 6.79 5.138C8.822 8.298 6.503 4.898 5.82 4.24c2.148 1.896 5.156 4.35 7.365 5.595.045.024.097.056.143.076.045-.129.09-.26.127-.389.52-1.86.074-3.97-1.158-5.943z" fill="#f4511e"/></svg><div style="position:absolute;left:184.6px;top:460.31px;font-size:17px;line-height:17px;color:#222024;font-weight:normal;letter-spacing:0.3px;white-space:nowrap;">FeedTable...wController</div><div style="position:absolute;right:1525px;top:461.93px;font-size:14.5px;line-height:14.5px;color:#5a575c;font-weight:bold;letter-spacing:0px;white-space:nowrap;">A</div><svg style="position:absolute;left:121.0px;top:493.31px;" width="12" height="7.5" viewBox="0 0 12 7.5"><path d="M1,1 L6.0,6.5 L11,1" fill="none" stroke="#47454a" stroke-width="1.5" stroke-linecap="round" stroke-linejoin="round"/></svg><svg style="position:absolute;left:139.0px;top:488.81px;" width="19" height="16" preserveAspectRatio="none" viewBox="0 0 19 16"><path d="M1.5,3 Q1.5,0.5 4,0.5 L7,0.5 Q8.2,0.5 9,1.8 L9.6,2.4 L16.5,2.4 Q18.5,2.4 18.5,4.5 L18.5,4.9 L1.5,4.9 Z" fill="#7b7f87"/><path d="M1.5,6.3 L18.5,6.3 L18.5,13.5 Q18.5,15.5 16.5,15.5 L3.5,15.5 Q1.5,15.5 1.5,13.5 Z" fill="#7b7f87"/><path d="M3.5,10.5 L6.8,13.8 L3.5,13.8 Z" fill="#e6e1e7"/></svg><div style="position:absolute;left:166.4px;top:489.02px;font-size:17px;line-height:17px;color:#222024;font-weight:normal;letter-spacing:0.3px;white-space:nowrap;">View</div><svg style="position:absolute;left:157.5px;top:517.22px;" width="19" height="16" preserveAspectRatio="none" viewBox="2 3 17.5 16.3"><path d="M13.543 3.203c3.812 2.594 5.156 7.545 4.258 11.016.047.07.103.145.15.215 2.014 2.508 1.46 5.156 1.21 4.672-1.05-2.046-2.99-1.53-3.977-1.014-.09.047-.18.094-.27.141l-.02.02c-2.04 1.08-4.77 1.17-7.525-.012a12.085 12.085 0 0 1-5.477-4.678c.63.467 1.305.873 2.004 1.215 2.85 1.332 5.686 1.229 7.686.004-2.84-2.193-5.265-5.061-7.059-7.37-.375-.378-.655-.85-.934-1.28 2.15 1.967 5.561 4.448 6.79 5.138C8.822 8.298 6.503 4.898 5.82 4.24c2.148 1.896 5.156 4.35 7.365 5.595.045.024.097.056.143.076.045-.129.09-.26.127-.389.52-1.86.074-3.97-1.158-5.943z" fill="#f4511e"/></svg><div style="position:absolute;left:184.6px;top:517.73px;font-size:17px;line-height:17px;color:#222024;font-weight:normal;letter-spacing:0.3px;white-space:nowrap;">LineButton</div><div style="position:absolute;right:1525px;top:519.35px;font-size:14.5px;line-height:14.5px;color:#5a575c;font-weight:bold;letter-spacing:0px;white-space:nowrap;">A</div><svg style="position:absolute;left:157.5px;top:545.9300000000001px;" width="19" height="16" preserveAspectRatio="none" viewBox="2 3 17.5 16.3"><path d="M13.543 3.203c3.812 2.594 5.156 7.545 4.258 11.016.047.07.103.145.15.215 2.014 2.508 1.46 5.156 1.21 4.672-1.05-2.046-2.99-1.53-3.977-1.014-.09.047-.18.094-.27.141l-.02.02c-2.04 1.08-4.77 1.17-7.525-.012a12.085 12.085 0 0 1-5.477-4.678c.63.467 1.305.873 2.004 1.215 2.85 1.332 5.686 1.229 7.686.004-2.84-2.193-5.265-5.061-7.059-7.37-.375-.378-.655-.85-.934-1.28 2.15 1.967 5.561 4.448 6.79 5.138C8.822 8.298 6.503 4.898 5.82 4.24c2.148 1.896 5.156 4.35 7.365 5.595.045.024.097.056.143.076.045-.129.09-.26.127-.389.52-1.86.074-3.97-1.158-5.943z" fill="#f4511e"/></svg><div style="position:absolute;left:184.6px;top:546.44px;font-size:17px;line-height:17px;color:#222024;font-weight:normal;letter-spacing:0.3px;white-space:nowrap;">UITextField...laceholder</div><div style="position:absolute;right:1525px;top:548.06px;font-size:14.5px;line-height:14.5px;color:#5a575c;font-weight:bold;letter-spacing:0px;white-space:nowrap;">A</div><svg style="position:absolute;left:157.5px;top:574.6400000000001px;" width="19" height="16" preserveAspectRatio="none" viewBox="2 3 17.5 16.3"><path d="M13.543 3.203c3.812 2.594 5.156 7.545 4.258 11.016.047.07.103.145.15.215 2.014 2.508 1.46 5.156 1.21 4.672-1.05-2.046-2.99-1.53-3.977-1.014-.09.047-.18.094-.27.141l-.02.02c-2.04 1.08-4.77 1.17-7.525-.012a12.085 12.085 0 0 1-5.477-4.678c.63.467 1.305.873 2.004 1.215 2.85 1.332 5.686 1.229 7.686.004-2.84-2.193-5.265-5.061-7.059-7.37-.375-.378-.655-.85-.934-1.28 2.15 1.967 5.561 4.448 6.79 5.138C8.822 8.298 6.503 4.898 5.82 4.24c2.148 1.896 5.156 4.35 7.365 5.595.045.024.097.056.143.076.045-.129.09-.26.127-.389.52-1.86.074-3.97-1.158-5.943z" fill="#f4511e"/></svg><div style="position:absolute;left:184.6px;top:575.15px;font-size:17px;line-height:17px;color:#222024;font-weight:normal;letter-spacing:0.3px;white-space:nowrap;">UINavigati...ransparent</div><div style="position:absolute;right:1525px;top:576.77px;font-size:14.5px;line-height:14.5px;color:#5a575c;font-weight:bold;letter-spacing:0px;white-space:nowrap;">A</div><svg style="position:absolute;left:157.5px;top:603.3500000000001px;" width="19" height="16" preserveAspectRatio="none" viewBox="2 3 17.5 16.3"><path d="M13.543 3.203c3.812 2.594 5.156 7.545 4.258 11.016.047.07.103.145.15.215 2.014 2.508 1.46 5.156 1.21 4.672-1.05-2.046-2.99-1.53-3.977-1.014-.09.047-.18.094-.27.141l-.02.02c-2.04 1.08-4.77 1.17-7.525-.012a12.085 12.085 0 0 1-5.477-4.678c.63.467 1.305.873 2.004 1.215 2.85 1.332 5.686 1.229 7.686.004-2.84-2.193-5.265-5.061-7.059-7.37-.375-.378-.655-.85-.934-1.28 2.15 1.967 5.561 4.448 6.79 5.138C8.822 8.298 6.503 4.898 5.82 4.24c2.148 1.896 5.156 4.35 7.365 5.595.045.024.097.056.143.076.045-.129.09-.26.127-.389.52-1.86.074-3.97-1.158-5.943z" fill="#f4511e"/></svg><div style="position:absolute;left:184.6px;top:603.86px;font-size:17px;line-height:17px;color:#222024;font-weight:normal;letter-spacing:0.3px;white-space:nowrap;">PostCell</div><div style="position:absolute;right:1525px;top:605.48px;font-size:14.5px;line-height:14.5px;color:#5a575c;font-weight:bold;letter-spacing:0px;white-space:nowrap;">A</div><svg style="position:absolute;left:139.0px;top:632.0600000000001px;" width="19" height="16" preserveAspectRatio="none" viewBox="2 3 17.5 16.3"><path d="M13.543 3.203c3.812 2.594 5.156 7.545 4.258 11.016.047.07.103.145.15.215 2.014 2.508 1.46 5.156 1.21 4.672-1.05-2.046-2.99-1.53-3.977-1.014-.09.047-.18.094-.27.141l-.02.02c-2.04 1.08-4.77 1.17-7.525-.012a12.085 12.085 0 0 1-5.477-4.678c.63.467 1.305.873 2.004 1.215 2.85 1.332 5.686 1.229 7.686.004-2.84-2.193-5.265-5.061-7.059-7.37-.375-.378-.655-.85-.934-1.28 2.15 1.967 5.561 4.448 6.79 5.138C8.822 8.298 6.503 4.898 5.82 4.24c2.148 1.896 5.156 4.35 7.365 5.595.045.024.097.056.143.076.045-.129.09-.26.127-.389.52-1.86.074-3.97-1.158-5.943z" fill="#f4511e"/></svg><div style="position:absolute;left:166.4px;top:632.57px;font-size:17px;line-height:17px;color:#222024;font-weight:normal;letter-spacing:0.3px;white-space:nowrap;">AppDelegate</div><div style="position:absolute;right:1525px;top:634.19px;font-size:14.5px;line-height:14.5px;color:#5a575c;font-weight:bold;letter-spacing:0px;white-space:nowrap;">M</div><svg style="position:absolute;left:138.0px;top:660.5699999999999px;" width="17" height="17" viewBox="0 0 17 17"><path d="M1.8,1.8 L9.6,9.6" stroke="#f5a623" stroke-width="2" stroke-linecap="round"/><path d="M15.2,1.8 L2.2,15" stroke="#f5a623" stroke-width="2.2" stroke-linecap="round"/><path d="M13.2,0.8 L16.2,3.8" stroke="#f5a623" stroke-width="1.2"/><ellipse cx="12.3" cy="12.6" rx="3.6" ry="2.3" transform="rotate(45 12.3 12.6)" fill="#f5a623"/><path d="M10,10.5 L11.3,11.8" stroke="#fff" stroke-width="0.9"/></svg><div style="position:absolute;left:166.4px;top:661.28px;font-size:17px;line-height:17px;color:#222024;font-weight:normal;letter-spacing:0.3px;white-space:nowrap;">Main</div><div style="position:absolute;right:1525px;top:662.90px;font-size:14.5px;line-height:14.5px;color:#5a575c;font-weight:bold;letter-spacing:0px;white-space:nowrap;">M</div><svg style="position:absolute;left:135.5px;top:688.78px;" width="21" height="17" viewBox="0 0 21 17"><rect x="1" y="1.5" width="14" height="11" rx="2" fill="none" stroke="#1e9bf0" stroke-width="1.6"/><rect x="5" y="5" width="15" height="11.5" rx="2" fill="#1e9bf0" stroke="#e6e1e7" stroke-width="1"/><circle cx="10" cy="8.6" r="1.5" fill="#fff"/><path d="M6.5,15 L10.5,11.5 L13,13 L16,10.5 L19.5,14 L19.5,15 Z" fill="#8fd0ff"/></svg><div style="position:absolute;left:166.4px;top:689.99px;font-size:17px;line-height:17px;color:#222024;font-weight:normal;letter-spacing:0.3px;white-space:nowrap;">Assets</div><div style="position:absolute;right:1525px;top:691.61px;font-size:14.5px;line-height:14.5px;color:#5a575c;font-weight:bold;letter-spacing:0px;white-space:nowrap;">M</div><svg style="position:absolute;left:138.0px;top:717.99px;" width="17" height="17" viewBox="0 0 17 17"><path d="M1.8,1.8 L9.6,9.6" stroke="#f5a623" stroke-width="2" stroke-linecap="round"/><path d="M15.2,1.8 L2.2,15" stroke="#f5a623" stroke-width="2.2" stroke-linecap="round"/><path d="M13.2,0.8 L16.2,3.8" stroke="#f5a623" stroke-width="1.2"/><ellipse cx="12.3" cy="12.6" rx="3.6" ry="2.3" transform="rotate(45 12.3 12.6)" fill="#f5a623"/><path d="M10,10.5 L11.3,11.8" stroke="#fff" stroke-width="0.9"/></svg><div style="position:absolute;left:166.4px;top:718.70px;font-size:17px;line-height:17px;color:#222024;font-weight:normal;letter-spacing:0.3px;white-space:nowrap;">LaunchScreen</div><svg style="position:absolute;left:138.5px;top:747.4000000000001px;" width="19.5" height="15.5" viewBox="0 0 19.5 15.5"><rect x="1" y="1" width="17.5" height="13.5" rx="2" fill="none" stroke="#50708c" stroke-width="1.5"/><path d="M1,5.50 L18.5,5.50 M1,10.00 L18.5,10.00 M9.75,1 L9.75,14.5" stroke="#50708c" stroke-width="1.5"/></svg><div style="position:absolute;left:166.4px;top:747.41px;font-size:17px;line-height:17px;color:#222024;font-weight:normal;letter-spacing:0.3px;white-space:nowrap;">Info</div><div style="position:absolute;right:1525px;top:749.03px;font-size:14.5px;line-height:14.5px;color:#5a575c;font-weight:bold;letter-spacing:0px;white-space:nowrap;">M</div><svg style="position:absolute;left:138.5px;top:776.11px;" width="19.5" height="15.5" viewBox="0 0 19.5 15.5"><rect x="1" y="1" width="17.5" height="13.5" rx="2" fill="none" stroke="#50708c" stroke-width="1.5"/><path d="M1,5.50 L18.5,5.50 M1,10.00 L18.5,10.00 M9.75,1 L9.75,14.5" stroke="#50708c" stroke-width="1.5"/></svg><div style="position:absolute;left:166.4px;top:776.12px;font-size:17px;line-height:17px;color:#222024;font-weight:normal;letter-spacing:0.3px;white-space:nowrap;">GoogleService-Info</div><div style="position:absolute;right:1525px;top:777.74px;font-size:14.5px;line-height:14.5px;color:#5a575c;font-weight:bold;letter-spacing:0px;white-space:nowrap;">A</div><div style="position:absolute;left:85.5px;top:820.00px;font-size:16.3px;line-height:16.3px;color:#222024;font-weight:bold;letter-spacing:0.6px;white-space:nowrap;">Package Dependencies</div><svg style="position:absolute;left:87px;top:849.2px;" width="7.5" height="12" viewBox="0 0 7.5 12"><path d="M1,1 L6.5,6.0 L1,11" fill="none" stroke="#47454a" stroke-width="1.5" stroke-linecap="round" stroke-linejoin="round"/></svg><svg style="position:absolute;left:103px;top:845.7px;" width="18" height="18" viewBox="0 0 18 18"><path d="M9,1 L17,4.5 L17,13.5 L9,17 L1,13.5 L1,4.5 Z" fill="#c48c45"/><path d="M1,4.5 L9,8 L17,4.5" fill="none" stroke="#f0e0c8" stroke-width="1.2"/><path d="M9,8 L9,17" stroke="#f0e0c8" stroke-width="1.2"/><path d="M4.8,2.8 L12.8,6.3" stroke="#f0e0c8" stroke-width="1.2"/></svg><div style="position:absolute;left:129.75px;top:846.91px;font-size:17px;line-height:17px;color:#222024;font-weight:normal;letter-spacing:0.3px;white-space:nowrap;">abseil</div><div style="position:absolute;left:181.9px;top:846.91px;font-size:17px;line-height:17px;color:#6a676c;font-weight:normal;letter-spacing:0.3px;white-space:nowrap;">0.20200225.4</div><svg style="position:absolute;left:87px;top:878.2px;" width="7.5" height="12" viewBox="0 0 7.5 12"><path d="M1,1 L6.5,6.0 L1,11" fill="none" stroke="#47454a" stroke-width="1.5" stroke-linecap="round" stroke-linejoin="round"/></svg><svg style="position:absolute;left:103px;top:874.7px;" width="18" height="18" viewBox="0 0 18 18"><path d="M9,1 L17,4.5 L17,13.5 L9,17 L1,13.5 L1,4.5 Z" fill="#c48c45"/><path d="M1,4.5 L9,8 L17,4.5" fill="none" stroke="#f0e0c8" stroke-width="1.2"/><path d="M9,8 L9,17" stroke="#f0e0c8" stroke-width="1.2"/><path d="M4.8,2.8 L12.8,6.3" stroke="#f0e0c8" stroke-width="1.2"/></svg><div style="position:absolute;left:129.75px;top:875.91px;font-size:17px;line-height:17px;color:#222024;font-weight:normal;letter-spacing:0.3px;white-space:nowrap;">AppAuth</div><div style="position:absolute;left:203.8px;top:875.91px;font-size:17px;line-height:17px;color:#6a676c;font-weight:normal;letter-spacing:0.3px;white-space:nowrap;">1.4.0</div><svg style="position:absolute;left:87px;top:907.1px;" width="7.5" height="12" viewBox="0 0 7.5 12"><path d="M1,1 L6.5,6.0 L1,11" fill="none" stroke="#47454a" stroke-width="1.5" stroke-linecap="round" stroke-linejoin="round"/></svg><svg style="position:absolute;left:103px;top:903.6px;" width="18" height="18" viewBox="0 0 18 18"><path d="M9,1 L17,4.5 L17,13.5 L9,17 L1,13.5 L1,4.5 Z" fill="#c48c45"/><path d="M1,4.5 L9,8 L17,4.5" fill="none" stroke="#f0e0c8" stroke-width="1.2"/><path d="M9,8 L9,17" stroke="#f0e0c8" stroke-width="1.2"/><path d="M4.8,2.8 L12.8,6.3" stroke="#f0e0c8" stroke-width="1.2"/></svg><div style="position:absolute;left:129.75px;top:904.81px;font-size:17px;line-height:17px;color:#222024;font-weight:normal;letter-spacing:0.3px;white-space:nowrap;">BoringSSL-GRPC</div><div style="position:absolute;left:276.5px;top:904.81px;font-size:17px;line-height:17px;color:#6a676c;font-weight:normal;letter-spacing:0.3px;white-space:nowrap;">0.7.2</div><div style="position:absolute;left:66px;top:909px;width:357px;height:36px;background:#e9e4ea;border-top:1px solid #d6d1d7"></div><svg style="position:absolute;left:82px;top:920px;" width="15" height="15" viewBox="0 0 15 15"><path d="M7.5,1 L7.5,14 M1,7.5 L14,7.5" stroke="#3a383c" stroke-width="1.6"/></svg><div style="position:absolute;left:103.5px;top:913.2px;width:311px;height:28px;background:#dbd6dc;border:1px solid #cfcad0;border-radius:7px;box-sizing:border-box"></div><div style="position:absolute;left:109px;top:919.4px;width:33.5px;height:15.5px;border:1.3px solid #5e5b61;border-radius:8px;box-sizing:border-box"></div><svg style="position:absolute;left:112px;top:922px;" width="28" height="11" viewBox="0 0 28 11"><path d="M2,2 L10,2 M3.5,5 L8.5,5 M5,8 L7,8" stroke="#5e5b61" stroke-width="1.2"/><path d="M16,3.5 L19,6.5 L22,3.5" fill="none" stroke="#5e5b61" stroke-width="1.3"/></svg><div style="position:absolute;left:148px;top:919.38px;font-size:15.5px;line-height:15.5px;color:#aeaab0;font-weight:normal;letter-spacing:0.2px;white-space:nowrap;">Filter</div><svg style="position:absolute;left:367.5px;top:918.5px;" width="18" height="18" viewBox="0 0 18 18"><circle cx="9" cy="9" r="7.8" fill="none" stroke="#5e5b61" stroke-width="1.2"/><path d="M9,4 L9,9.5 L5.5,9.5" fill="none" stroke="#5e5b61" stroke-width="1.2"/></svg><svg style="position:absolute;left:390px;top:918.5px;" width="18" height="18" viewBox="0 0 18 18"><rect x="0.8" y="0.8" width="16.4" height="16.4" rx="1" fill="none" stroke="#5e5b61" stroke-width="1.2"/><path d="M3.5,9 L8,9 M5.75,6.5 L5.75,11.5 M10,9 L14.5,9" stroke="#5e5b61" stroke-width="1.2"/></svg><div style="position:absolute;left:0;top:0;width:1920px;height:1012px;clip-path:inset(190px 407px 143px 775px)"><div style="position:absolute;left:700px;top:225px;width:135px;height:21px;background:#fff;border:1px solid #d3d3d3;border-radius:4px;box-sizing:border-box"></div><div style="position:absolute;left:600px;top:253px;width:235px;height:555px;background:#e9e9e9;border:1.2px solid #4a4a4a;border-radius:34px;box-sizing:border-box"></div><div style="position:absolute;right:1127px;top:540.26px;font-size:18px;line-height:18px;color:#9b9b9b;font-weight:normal;letter-spacing:0.15px;white-space:nowrap;-webkit-text-stroke:0.3px #9b9b9b">Navigation Controller</div><div style="position:absolute;left:835px;top:530.5px;width:131px;height:1.4px;background:#8e8e8e"></div><svg style="position:absolute;left:956px;top:521px;" width="12" height="21" viewBox="0 0 12 21"><path d="M1,1 L10.5,10.5 L1,20" fill="none" stroke="#8e8e8e" stroke-width="1.6"/></svg><div style="position:absolute;left:892px;top:521.5px;width:19px;height:19px;background:#f2f2f2;border-radius:50%"></div><svg style="position:absolute;left:892.2px;top:522px;" width="19" height="19" viewBox="0 0 18 18"><circle cx="9" cy="9" r="8.4" fill="none" stroke="#8e8e8e" stroke-width="1.2"/><circle cx="5.8" cy="5.8" r="1.2" fill="none" stroke="#8e8e8e" stroke-width="1"/><circle cx="12.2" cy="12.2" r="1.2" fill="none" stroke="#8e8e8e" stroke-width="1"/><path d="M6.6,6.6 L11.4,11.4" stroke="#8e8e8e" stroke-width="1"/></svg><div style="position:absolute;left:968px;top:225.3px;width:258px;height:20.8px;background:#fff;border:1px solid #d3d3d3;border-radius:4px;box-sizing:border-box"></div><svg style="position:absolute;left:1067.5px;top:230px;" width="11" height="11" viewBox="0 0 11 11"><circle cx="5.5" cy="5.5" r="5.2" fill="#fdb300"/><path d="M3,4 L8,4 M3,5.6 L8,5.6 M3,7.2 L8,7.2" stroke="#fff" stroke-width="0.8"/></svg><svg style="position:absolute;left:1092px;top:230px;" width="10" height="11" viewBox="0 0 10 11"><path d="M5,0.3 L9.7,2.8 L9.7,8.2 L5,10.7 L0.3,8.2 L0.3,2.8 Z" fill="#f39a2c"/><path d="M0.3,2.8 L5,5.3 L9.7,2.8 M5,5.3 L5,10.7" stroke="#f7c07a" stroke-width="0.6" fill="none"/></svg><svg style="position:absolute;left:1116.5px;top:230px;" width="11" height="11" viewBox="0 0 11 11"><rect x="0" y="0" width="11" height="11" fill="#f39a2c"/><path d="M6.5,2.5 L2.8,2.5 L2.8,8.5 L6.5,8.5 M4.5,5.5 L8.5,5.5" fill="none" stroke="#fff" stroke-width="0.9"/></svg><div style="position:absolute;left:968.7px;top:253.5px;width:257px;height:554.3px;border-radius:34px;overflow:hidden;background:#e9e9e9"><div style="position:absolute;left:0;top:0;width:256px;height:87px;background:#000"></div><svg width="256" height="230" viewBox="0 0 256 230" style="position:absolute;left:0;top:87;overflow:hidden">
<defs>
<linearGradient id="sky" x1="0" y1="0" x2="0" y2="1"><stop offset="0" stop-color="#2a2634"/><stop offset="0.45" stop-color="#362e40"/><stop offset="0.8" stop-color="#443848"/></linearGradient>
<linearGradient id="snow" x1="0" y1="0" x2="0" y2="1"><stop offset="0" stop-color="#403b48"/><stop offset="1" stop-color="#4e4858"/></linearGradient>
<filter id="bl" x="-30%" y="-80%" width="160%" height="260%"><feGaussianBlur stdDeviation="9"/></filter>
<filter id="bl2" x="-20%" y="-50%" width="140%" height="200%"><feGaussianBlur stdDeviation="4"/></filter>
<filter id="bl4" x="-20%" y="-50%" width="140%" height="200%"><feGaussianBlur stdDeviation="1.8"/></filter>
<filter id="bl3" x="-50%" y="-50%" width="200%" height="200%"><feGaussianBlur stdDeviation="16"/></filter>
</defs>
<rect width="256" height="230" fill="url(#sky)"/>
<ellipse cx="55" cy="40" rx="75" ry="22" fill="#5a566c" opacity="0.5" filter="url(#bl3)" transform="rotate(-42 55 40)"/>
<ellipse cx="150" cy="95" rx="100" ry="40" fill="#5a4048" opacity="0.45" filter="url(#bl3)"/>
<ellipse cx="225" cy="150" rx="40" ry="40" fill="#5a4860" opacity="0.4" filter="url(#bl3)"/>
<circle cx="82.9" cy="30.2" r="0.3" fill="#fff" opacity="0.39"/><circle cx="137.2" cy="73.1" r="0.3" fill="#fff" opacity="0.85"/><circle cx="55.0" cy="17.2" r="0.5" fill="#fff" opacity="0.39"/><circle cx="23.2" cy="84.9" r="0.3" fill="#fff" opacity="0.87"/><circle cx="161.4" cy="116.6" r="0.3" fill="#fff" opacity="0.67"/><circle cx="101.6" cy="195.3" r="0.3" fill="#fff" opacity="0.66"/><circle cx="34.1" cy="83.8" r="0.3" fill="#fff" opacity="0.66"/><circle cx="143.4" cy="136.4" r="0.3" fill="#fff" opacity="0.67"/><circle cx="163.6" cy="74.5" r="0.3" fill="#fff" opacity="0.66"/><circle cx="158.5" cy="99.3" r="0.5" fill="#fff" opacity="0.78"/><circle cx="119.2" cy="184.7" r="0.4" fill="#fff" opacity="0.51"/><circle cx="203.4" cy="139.8" r="0.35" fill="#fff" opacity="0.40"/><circle cx="76.9" cy="99.0" r="0.4" fill="#fff" opacity="0.75"/><circle cx="73.7" cy="196.0" r="0.3" fill="#fff" opacity="0.63"/><circle cx="42.2" cy="68.4" r="0.5" fill="#fff" opacity="0.58"/><circle cx="246.3" cy="15.5" r="0.4" fill="#fff" opacity="0.54"/><circle cx="89.6" cy="99.3" r="0.5" fill="#fff" opacity="0.39"/><circle cx="24.0" cy="54.0" r="0.3" fill="#fff" opacity="0.38"/><circle cx="179.6" cy="129.4" r="0.5" fill="#fff" opacity="0.51"/><circle cx="98.8" cy="133.7" r="0.3" fill="#fff" opacity="0.87"/><circle cx="91.0" cy="122.2" r="0.5" fill="#fff" opacity="0.38"/><circle cx="196.7" cy="25.9" r="0.35" fill="#fff" opacity="0.57"/><circle cx="234.7" cy="99.3" r="0.35" fill="#fff" opacity="0.60"/><circle cx="140.7" cy="176.7" r="0.5" fill="#fff" opacity="0.83"/><circle cx="71.3" cy="83.1" r="0.4" fill="#fff" opacity="0.73"/><circle cx="97.4" cy="46.2" r="0.3" fill="#fff" opacity="0.45"/><circle cx="59.4" cy="46.7" r="0.5" fill="#fff" opacity="0.81"/><circle cx="46.7" cy="56.4" r="0.35" fill="#fff" opacity="0.58"/><circle cx="94.5" cy="113.3" r="0.35" fill="#fff" opacity="0.73"/><circle cx="132.0" cy="123.5" r="0.3" fill="#fff" opacity="0.60"/><circle cx="223.0" cy="190.4" r="0.5" fill="#fff" opacity="0.57"/><circle cx="100.9" cy="96.3" r="0.5" fill="#fff" opacity="0.38"/><circle cx="17.2" cy="41.8" r="0.35" fill="#fff" opacity="0.41"/><circle cx="153.8" cy="20.5" r="0.35" fill="#fff" opacity="0.65"/><circle cx="242.9" cy="122.7" r="0.3" fill="#fff" opacity="0.83"/><circle cx="157.2" cy="29.7" r="0.4" fill="#fff" opacity="0.88"/><circle cx="154.2" cy="94.8" r="0.3" fill="#fff" opacity="0.82"/><circle cx="254.2" cy="93.2" r="0.5" fill="#fff" opacity="0.52"/><circle cx="36.9" cy="149.9" r="0.4" fill="#fff" opacity="0.61"/><circle cx="177.2" cy="103.3" r="0.35" fill="#fff" opacity="0.87"/><circle cx="135.2" cy="29.3" r="0.3" fill="#fff" opacity="0.77"/><circle cx="76.3" cy="128.6" r="0.3" fill="#fff" opacity="0.73"/><circle cx="66.8" cy="73.3" r="0.35" fill="#fff" opacity="0.55"/><circle cx="57.0" cy="108.3" r="0.4" fill="#fff" opacity="0.70"/><circle cx="157.0" cy="157.7" r="0.35" fill="#fff" opacity="0.79"/><circle cx="209.5" cy="148.0" r="0.35" fill="#fff" opacity="0.46"/><circle cx="126.2" cy="146.2" r="0.3" fill="#fff" opacity="0.78"/><circle cx="120.9" cy="38.7" r="0.4" fill="#fff" opacity="0.60"/><circle cx="239.9" cy="197.6" r="0.4" fill="#fff" opacity="0.39"/><circle cx="26.2" cy="94.0" r="0.4" fill="#fff" opacity="0.46"/><circle cx="159.8" cy="180.1" r="0.3" fill="#fff" opacity="0.61"/><circle cx="167.2" cy="159.9" r="0.3" fill="#fff" opacity="0.81"/><circle cx="30.7" cy="77.7" r="0.35" fill="#fff" opacity="0.61"/><circle cx="45.7" cy="157.8" r="0.4" fill="#fff" opacity="0.40"/><circle cx="242.2" cy="144.4" r="0.5" fill="#fff" opacity="0.57"/><circle cx="242.4" cy="145.0" r="0.35" fill="#fff" opacity="0.90"/><circle cx="7.1" cy="118.2" r="0.5" fill="#fff" opacity="0.79"/><circle cx="37.4" cy="165.3" r="0.5" fill="#fff" opacity="0.71"/><circle cx="89.7" cy="109.7" r="0.35" fill="#fff" opacity="0.36"/><circle cx="204.6" cy="145.3" r="0.3" fill="#fff" opacity="0.64"/><circle cx="239.0" cy="86.8" r="0.35" fill="#fff" opacity="0.80"/><circle cx="54.0" cy="50.4" r="0.4" fill="#fff" opacity="0.63"/><circle cx="195.5" cy="65.2" r="0.5" fill="#fff" opacity="0.81"/><circle cx="15.6" cy="148.0" r="0.5" fill="#fff" opacity="0.71"/><circle cx="208.7" cy="103.4" r="0.35" fill="#fff" opacity="0.64"/><circle cx="134.0" cy="3.7" r="0.5" fill="#fff" opacity="0.78"/><circle cx="155.8" cy="155.2" r="0.35" fill="#fff" opacity="0.44"/><circle cx="121.2" cy="145.0" r="0.3" fill="#fff" opacity="0.53"/><circle cx="132.7" cy="111.1" r="0.3" fill="#fff" opacity="0.84"/><circle cx="14.5" cy="38.3" r="0.3" fill="#fff" opacity="0.77"/><circle cx="130.0" cy="112.3" r="0.3" fill="#fff" opacity="0.59"/><circle cx="156.8" cy="101.1" r="0.35" fill="#fff" opacity="0.73"/><circle cx="115.8" cy="106.7" r="0.5" fill="#fff" opacity="0.63"/><circle cx="63.4" cy="104.6" r="0.4" fill="#fff" opacity="0.86"/><circle cx="228.5" cy="40.5" r="0.5" fill="#fff" opacity="0.43"/><circle cx="31.1" cy="88.4" r="0.3" fill="#fff" opacity="0.72"/><circle cx="109.7" cy="42.5" r="0.4" fill="#fff" opacity="0.78"/><circle cx="229.6" cy="30.9" r="0.4" fill="#fff" opacity="0.43"/><circle cx="226.0" cy="193.5" r="0.35" fill="#fff" opacity="0.76"/><circle cx="24.1" cy="177.0" r="0.35" fill="#fff" opacity="0.89"/><circle cx="213.1" cy="32.3" r="0.5" fill="#fff" opacity="0.90"/><circle cx="103.4" cy="84.3" r="0.4" fill="#fff" opacity="0.53"/><circle cx="184.9" cy="3.9" r="0.5" fill="#fff" opacity="0.59"/><circle cx="4.6" cy="66.3" r="0.4" fill="#fff" opacity="0.63"/><circle cx="16.5" cy="197.0" r="0.35" fill="#fff" opacity="0.88"/><circle cx="26.8" cy="53.1" r="0.3" fill="#fff" opacity="0.85"/><circle cx="46.5" cy="151.2" r="0.5" fill="#fff" opacity="0.82"/><circle cx="173.0" cy="189.2" r="0.5" fill="#fff" opacity="0.43"/><circle cx="235.3" cy="114.1" r="0.4" fill="#fff" opacity="0.40"/><circle cx="14.7" cy="137.6" r="0.5" fill="#fff" opacity="0.84"/><circle cx="68.8" cy="3.4" r="0.3" fill="#fff" opacity="0.79"/><circle cx="21.4" cy="171.2" r="0.3" fill="#fff" opacity="0.50"/><circle cx="31.1" cy="2.3" r="0.5" fill="#fff" opacity="0.86"/><circle cx="68.6" cy="25.8" r="0.35" fill="#fff" opacity="0.87"/><circle cx="248.1" cy="52.4" r="0.35" fill="#fff" opacity="0.46"/><circle cx="79.9" cy="61.0" r="0.35" fill="#fff" opacity="0.51"/><circle cx="128.0" cy="35.6" r="0.4" fill="#fff" opacity="0.79"/><circle cx="254.6" cy="7.4" r="0.3" fill="#fff" opacity="0.75"/><circle cx="141.1" cy="37.9" r="0.5" fill="#fff" opacity="0.49"/><circle cx="114.4" cy="131.7" r="0.5" fill="#fff" opacity="0.71"/><circle cx="139.8" cy="177.7" r="0.4" fill="#fff" opacity="0.73"/><circle cx="251.5" cy="68.5" r="0.35" fill="#fff" opacity="0.57"/><circle cx="89.0" cy="10.9" r="0.35" fill="#fff" opacity="0.36"/><circle cx="160.1" cy="176.0" r="0.5" fill="#fff" opacity="0.44"/><circle cx="21.6" cy="168.3" r="0.4" fill="#fff" opacity="0.68"/><circle cx="177.3" cy="9.0" r="0.35" fill="#fff" opacity="0.44"/><circle cx="114.1" cy="52.6" r="0.4" fill="#fff" opacity="0.88"/><circle cx="140.1" cy="48.9" r="0.4" fill="#fff" opacity="0.47"/><circle cx="46.8" cy="67.1" r="0.3" fill="#fff" opacity="0.61"/><circle cx="128.7" cy="40.2" r="0.3" fill="#fff" opacity="0.40"/><circle cx="209.2" cy="28.8" r="0.3" fill="#fff" opacity="0.57"/><circle cx="76.7" cy="125.9" r="0.3" fill="#fff" opacity="0.67"/><circle cx="135.5" cy="150.1" r="0.5" fill="#fff" opacity="0.77"/><circle cx="184.5" cy="98.8" r="0.4" fill="#fff" opacity="0.75"/><circle cx="164.7" cy="8.8" r="0.5" fill="#fff" opacity="0.75"/><circle cx="207.9" cy="27.9" r="0.3" fill="#fff" opacity="0.80"/><circle cx="149.5" cy="178.6" r="0.35" fill="#fff" opacity="0.40"/><circle cx="10.7" cy="127.4" r="0.3" fill="#fff" opacity="0.56"/><circle cx="115.6" cy="10.2" r="0.3" fill="#fff" opacity="0.69"/><circle cx="174.3" cy="97.9" r="0.3" fill="#fff" opacity="0.60"/><circle cx="17.9" cy="186.5" r="0.3" fill="#fff" opacity="0.71"/><circle cx="16.9" cy="147.4" r="0.4" fill="#fff" opacity="0.80"/><circle cx="216.6" cy="47.0" r="0.35" fill="#fff" opacity="0.48"/><circle cx="166.4" cy="92.1" r="0.5" fill="#fff" opacity="0.39"/><circle cx="233.1" cy="57.5" r="0.3" fill="#fff" opacity="0.69"/><circle cx="164.5" cy="15.5" r="0.35" fill="#fff" opacity="0.53"/><circle cx="166.8" cy="138.6" r="0.35" fill="#fff" opacity="0.36"/><circle cx="15.5" cy="53.8" r="0.3" fill="#fff" opacity="0.73"/><circle cx="173.0" cy="58.2" r="0.4" fill="#fff" opacity="0.61"/><circle cx="119.4" cy="23.7" r="0.35" fill="#fff" opacity="0.52"/><circle cx="22.0" cy="94.6" r="0.4" fill="#fff" opacity="0.60"/><circle cx="209.9" cy="193.6" r="0.5" fill="#fff" opacity="0.90"/><circle cx="99.0" cy="183.3" r="0.35" fill="#fff" opacity="0.39"/><circle cx="23.1" cy="149.5" r="0.4" fill="#fff" opacity="0.87"/><circle cx="33.9" cy="164.0" r="0.4" fill="#fff" opacity="0.84"/><circle cx="180.1" cy="46.3" r="0.5" fill="#fff" opacity="0.57"/><circle cx="40.7" cy="190.0" r="0.5" fill="#fff" opacity="0.57"/><circle cx="186.2" cy="83.2" r="0.5" fill="#fff" opacity="0.52"/><circle cx="215.1" cy="0.3" r="0.4" fill="#fff" opacity="0.81"/><circle cx="30.7" cy="185.3" r="0.3" fill="#fff" opacity="0.85"/><circle cx="74.2" cy="74.4" r="0.5" fill="#fff" opacity="0.56"/><circle cx="222.7" cy="15.3" r="0.5" fill="#fff" opacity="0.77"/><circle cx="218.7" cy="56.1" r="0.3" fill="#fff" opacity="0.81"/><circle cx="73.1" cy="187.1" r="0.35" fill="#fff" opacity="0.88"/><circle cx="111.7" cy="63.1" r="0.4" fill="#fff" opacity="0.78"/><circle cx="109.5" cy="5.8" r="0.5" fill="#fff" opacity="0.85"/><circle cx="240.8" cy="109.8" r="0.3" fill="#fff" opacity="0.38"/><circle cx="187.5" cy="90.2" r="0.35" fill="#fff" opacity="0.70"/><circle cx="73.3" cy="9.8" r="0.35" fill="#fff" opacity="0.44"/><circle cx="106.2" cy="56.3" r="0.4" fill="#fff" opacity="0.76"/><circle cx="249.9" cy="52.0" r="0.35" fill="#fff" opacity="0.52"/><circle cx="142.7" cy="78.9" r="0.35" fill="#fff" opacity="0.70"/><circle cx="19.2" cy="100.1" r="0.5" fill="#fff" opacity="0.65"/><circle cx="116.0" cy="66.6" r="0.5" fill="#fff" opacity="0.59"/><circle cx="140.2" cy="48.8" r="0.35" fill="#fff" opacity="0.54"/><circle cx="23.3" cy="47.8" r="0.4" fill="#fff" opacity="0.80"/><circle cx="51.7" cy="4.0" r="0.5" fill="#fff" opacity="0.56"/><circle cx="190.9" cy="42.0" r="0.4" fill="#fff" opacity="0.54"/><circle cx="15.9" cy="55.5" r="0.4" fill="#fff" opacity="0.42"/><circle cx="128.9" cy="125.9" r="0.35" fill="#fff" opacity="0.40"/><circle cx="229.6" cy="76.9" r="0.5" fill="#fff" opacity="0.59"/><circle cx="79.9" cy="162.9" r="0.3" fill="#fff" opacity="0.42"/><circle cx="108.9" cy="152.7" r="0.5" fill="#fff" opacity="0.88"/><circle cx="125.4" cy="14.6" r="0.5" fill="#fff" opacity="0.88"/><circle cx="63.6" cy="21.8" r="0.35" fill="#fff" opacity="0.43"/><circle cx="248.8" cy="21.8" r="0.5" fill="#fff" opacity="0.40"/><circle cx="198.9" cy="0.3" r="0.35" fill="#fff" opacity="0.48"/><circle cx="235.5" cy="129.1" r="0.4" fill="#fff" opacity="0.88"/><circle cx="160.4" cy="105.7" r="0.5" fill="#fff" opacity="0.73"/><circle cx="28.7" cy="14.1" r="0.35" fill="#fff" opacity="0.56"/><circle cx="57.2" cy="120.2" r="0.3" fill="#fff" opacity="0.65"/><circle cx="255.1" cy="55.7" r="0.4" fill="#fff" opacity="0.70"/><circle cx="226.2" cy="95.1" r="0.35" fill="#fff" opacity="0.65"/><circle cx="7.5" cy="82.4" r="0.4" fill="#fff" opacity="0.38"/><circle cx="49.7" cy="177.0" r="0.5" fill="#fff" opacity="0.39"/><circle cx="58.3" cy="84.9" r="0.4" fill="#fff" opacity="0.47"/><circle cx="8.7" cy="67.6" r="0.5" fill="#fff" opacity="0.55"/><circle cx="101.5" cy="1.4" r="0.4" fill="#fff" opacity="0.76"/><circle cx="129.2" cy="41.0" r="0.35" fill="#fff" opacity="0.52"/><circle cx="209.9" cy="46.2" r="0.35" fill="#fff" opacity="0.50"/><circle cx="227.7" cy="21.8" r="0.5" fill="#fff" opacity="0.69"/><circle cx="229.5" cy="97.0" r="0.3" fill="#fff" opacity="0.87"/><circle cx="37.5" cy="78.7" r="0.35" fill="#fff" opacity="0.36"/><circle cx="152.6" cy="83.1" r="0.3" fill="#fff" opacity="0.45"/><circle cx="115.1" cy="142.4" r="0.4" fill="#fff" opacity="0.75"/><circle cx="255.4" cy="186.3" r="0.4" fill="#fff" opacity="0.45"/><circle cx="167.0" cy="105.0" r="0.5" fill="#fff" opacity="0.37"/><circle cx="170.1" cy="75.7" r="0.4" fill="#fff" opacity="0.89"/><circle cx="113.3" cy="21.8" r="0.3" fill="#fff" opacity="0.50"/><circle cx="90.0" cy="191.1" r="0.3" fill="#fff" opacity="0.66"/><circle cx="194.3" cy="76.0" r="0.4" fill="#fff" opacity="0.80"/><circle cx="110.7" cy="9.9" r="0.5" fill="#fff" opacity="0.46"/><circle cx="138.6" cy="89.3" r="0.4" fill="#fff" opacity="0.55"/><circle cx="229.6" cy="6.1" r="0.5" fill="#fff" opacity="0.49"/><circle cx="160.1" cy="81.0" r="0.5" fill="#fff" opacity="0.37"/><circle cx="16.0" cy="184.0" r="0.4" fill="#fff" opacity="0.46"/><circle cx="16.1" cy="121.1" r="0.4" fill="#fff" opacity="0.50"/><circle cx="245.2" cy="123.4" r="0.4" fill="#fff" opacity="0.76"/><circle cx="176.5" cy="184.8" r="0.4" fill="#fff" opacity="0.35"/><circle cx="193.4" cy="183.3" r="0.3" fill="#fff" opacity="0.36"/><circle cx="59.9" cy="95.0" r="0.5" fill="#fff" opacity="0.87"/><circle cx="98.9" cy="50.2" r="0.5" fill="#fff" opacity="0.80"/><circle cx="34.0" cy="99.3" r="0.3" fill="#fff" opacity="0.79"/><circle cx="189.1" cy="164.6" r="0.35" fill="#fff" opacity="0.68"/><circle cx="83.9" cy="63.9" r="0.4" fill="#fff" opacity="0.78"/><circle cx="152.5" cy="102.4" r="0.5" fill="#fff" opacity="0.76"/><circle cx="63.3" cy="12.9" r="0.3" fill="#fff" opacity="0.61"/><circle cx="139.4" cy="32.1" r="0.5" fill="#fff" opacity="0.84"/><circle cx="252.9" cy="53.0" r="0.3" fill="#fff" opacity="0.46"/><circle cx="107.8" cy="197.7" r="0.5" fill="#fff" opacity="0.45"/><circle cx="34.0" cy="92.2" r="0.35" fill="#fff" opacity="0.76"/><circle cx="216.8" cy="132.9" r="0.3" fill="#fff" opacity="0.78"/><circle cx="75.2" cy="55.9" r="0.4" fill="#fff" opacity="0.56"/><circle cx="188.9" cy="39.8" r="0.35" fill="#fff" opacity="0.45"/><circle cx="60.3" cy="56.3" r="0.35" fill="#fff" opacity="0.53"/><circle cx="101.4" cy="198.5" r="0.35" fill="#fff" opacity="0.71"/><circle cx="25.7" cy="92.8" r="0.3" fill="#fff" opacity="0.41"/><circle cx="121.5" cy="163.8" r="0.5" fill="#fff" opacity="0.85"/><circle cx="10.3" cy="58.7" r="0.3" fill="#fff" opacity="0.38"/><circle cx="153.7" cy="165.6" r="0.35" fill="#fff" opacity="0.86"/><circle cx="95.3" cy="173.2" r="0.5" fill="#fff" opacity="0.68"/><circle cx="198.4" cy="133.0" r="0.3" fill="#fff" opacity="0.41"/><circle cx="152.6" cy="124.0" r="0.35" fill="#fff" opacity="0.37"/><circle cx="87.0" cy="8.8" r="0.4" fill="#fff" opacity="0.37"/><circle cx="187.5" cy="182.8" r="0.3" fill="#fff" opacity="0.80"/><circle cx="104.7" cy="74.4" r="0.4" fill="#fff" opacity="0.39"/><circle cx="8.1" cy="99.1" r="0.5" fill="#fff" opacity="0.38"/><circle cx="26.0" cy="79.1" r="0.35" fill="#fff" opacity="0.70"/><circle cx="23.3" cy="32.7" r="0.4" fill="#fff" opacity="0.58"/><circle cx="72.5" cy="61.5" r="0.3" fill="#fff" opacity="0.52"/><circle cx="145.0" cy="71.4" r="0.5" fill="#fff" opacity="0.36"/><circle cx="196.3" cy="160.4" r="0.35" fill="#fff" opacity="0.56"/><circle cx="103.7" cy="188.4" r="0.5" fill="#fff" opacity="0.85"/><circle cx="108.5" cy="164.1" r="0.5" fill="#fff" opacity="0.67"/><circle cx="93.4" cy="154.6" r="0.35" fill="#fff" opacity="0.36"/><circle cx="141.2" cy="128.1" r="0.5" fill="#fff" opacity="0.40"/><circle cx="159.3" cy="74.2" r="0.35" fill="#fff" opacity="0.43"/><circle cx="72.5" cy="104.2" r="0.3" fill="#fff" opacity="0.41"/><circle cx="125.6" cy="161.0" r="0.35" fill="#fff" opacity="0.52"/><circle cx="214.3" cy="8.7" r="0.5" fill="#fff" opacity="0.52"/><circle cx="155.6" cy="127.3" r="0.3" fill="#fff" opacity="0.85"/><circle cx="158.8" cy="164.9" r="0.35" fill="#fff" opacity="0.70"/><circle cx="219.3" cy="124.2" r="0.35" fill="#fff" opacity="0.81"/><circle cx="46.8" cy="43.6" r="0.5" fill="#fff" opacity="0.87"/><circle cx="40.1" cy="71.8" r="0.35" fill="#fff" opacity="0.49"/><circle cx="185.6" cy="179.5" r="0.3" fill="#fff" opacity="0.84"/><circle cx="215.7" cy="134.5" r="0.4" fill="#fff" opacity="0.41"/><circle cx="153.5" cy="110.0" r="0.4" fill="#fff" opacity="0.71"/><circle cx="78.9" cy="49.9" r="0.5" fill="#fff" opacity="0.71"/><circle cx="114.4" cy="87.7" r="0.3" fill="#fff" opacity="0.35"/><circle cx="252.5" cy="93.1" r="0.5" fill="#fff" opacity="0.77"/><circle cx="199.7" cy="91.7" r="0.35" fill="#fff" opacity="0.80"/><circle cx="102.5" cy="13.4" r="0.4" fill="#fff" opacity="0.59"/><circle cx="23.5" cy="88.4" r="0.3" fill="#fff" opacity="0.37"/><circle cx="33.3" cy="184.4" r="0.4" fill="#fff" opacity="0.78"/><circle cx="130.9" cy="10.9" r="0.5" fill="#fff" opacity="0.71"/><circle cx="200.8" cy="5.2" r="0.3" fill="#fff" opacity="0.90"/><circle cx="187.4" cy="163.0" r="0.35" fill="#fff" opacity="0.42"/><circle cx="226.7" cy="57.6" r="0.35" fill="#fff" opacity="0.73"/><circle cx="184.6" cy="44.2" r="0.4" fill="#fff" opacity="0.69"/><circle cx="64.6" cy="64.8" r="0.4" fill="#fff" opacity="0.85"/><circle cx="116.8" cy="50.8" r="0.5" fill="#fff" opacity="0.46"/><circle cx="67.3" cy="101.2" r="0.4" fill="#fff" opacity="0.55"/><circle cx="50.9" cy="80.7" r="0.4" fill="#fff" opacity="0.72"/><circle cx="229.2" cy="33.7" r="0.4" fill="#fff" opacity="0.41"/><circle cx="135.9" cy="127.3" r="0.4" fill="#fff" opacity="0.88"/><circle cx="116.0" cy="104.3" r="0.3" fill="#fff" opacity="0.49"/><circle cx="137.1" cy="171.3" r="0.4" fill="#fff" opacity="0.50"/><circle cx="253.6" cy="115.5" r="0.4" fill="#fff" opacity="0.53"/><circle cx="20.8" cy="46.0" r="0.3" fill="#fff" opacity="0.51"/><circle cx="132.1" cy="62.0" r="0.4" fill="#fff" opacity="0.75"/><circle cx="191.3" cy="44.3" r="0.4" fill="#fff" opacity="0.69"/><circle cx="110.7" cy="102.5" r="0.3" fill="#fff" opacity="0.42"/><circle cx="58.2" cy="130.6" r="0.3" fill="#fff" opacity="0.38"/><circle cx="145.2" cy="60.7" r="0.4" fill="#fff" opacity="0.64"/><circle cx="105.8" cy="60.2" r="0.35" fill="#fff" opacity="0.46"/><circle cx="159.7" cy="95.0" r="0.35" fill="#fff" opacity="0.36"/><circle cx="205.2" cy="141.5" r="0.5" fill="#fff" opacity="0.40"/><circle cx="163.4" cy="174.3" r="0.4" fill="#fff" opacity="0.57"/><circle cx="67.6" cy="2.3" r="0.4" fill="#fff" opacity="0.68"/><circle cx="148.1" cy="120.4" r="0.5" fill="#fff" opacity="0.49"/><circle cx="231.3" cy="8.8" r="0.3" fill="#fff" opacity="0.57"/><circle cx="60.8" cy="11.7" r="0.3" fill="#fff" opacity="0.36"/><circle cx="141.0" cy="188.2" r="0.35" fill="#fff" opacity="0.58"/><circle cx="132.7" cy="128.5" r="0.5" fill="#fff" opacity="0.80"/><circle cx="44.7" cy="61.9" r="0.4" fill="#fff" opacity="0.69"/><circle cx="254.5" cy="144.9" r="0.5" fill="#fff" opacity="0.74"/><circle cx="1.6" cy="168.9" r="0.5" fill="#fff" opacity="0.39"/><circle cx="167.8" cy="35.1" r="0.3" fill="#fff" opacity="0.49"/><circle cx="164.9" cy="24.7" r="0.4" fill="#fff" opacity="0.74"/><circle cx="68.1" cy="110.8" r="0.5" fill="#fff" opacity="0.73"/><circle cx="234.8" cy="194.4" r="0.4" fill="#fff" opacity="0.70"/><circle cx="247.1" cy="43.4" r="0.3" fill="#fff" opacity="0.44"/><circle cx="231.6" cy="168.3" r="0.35" fill="#fff" opacity="0.87"/><circle cx="191.0" cy="65.4" r="0.5" fill="#fff" opacity="0.53"/><circle cx="61.2" cy="181.5" r="0.5" fill="#fff" opacity="0.61"/><circle cx="135.8" cy="1.3" r="0.3" fill="#fff" opacity="0.59"/><circle cx="185.5" cy="114.1" r="0.4" fill="#fff" opacity="0.78"/><circle cx="100.2" cy="117.1" r="0.35" fill="#fff" opacity="0.43"/><circle cx="6.9" cy="21.3" r="0.35" fill="#fff" opacity="0.54"/><circle cx="36.3" cy="5.7" r="0.3" fill="#fff" opacity="0.43"/><circle cx="164.7" cy="8.5" r="0.3" fill="#fff" opacity="0.76"/><circle cx="16.8" cy="118.1" r="0.4" fill="#fff" opacity="0.46"/><circle cx="244.4" cy="106.8" r="0.3" fill="#fff" opacity="0.83"/><circle cx="193.5" cy="142.2" r="0.5" fill="#fff" opacity="0.41"/><circle cx="52.7" cy="22.4" r="0.3" fill="#fff" opacity="0.87"/><circle cx="233.2" cy="150.8" r="0.3" fill="#fff" opacity="0.80"/><circle cx="161.7" cy="57.5" r="0.3" fill="#fff" opacity="0.42"/><circle cx="202.7" cy="129.3" r="0.4" fill="#fff" opacity="0.53"/><circle cx="108.5" cy="4.2" r="0.4" fill="#fff" opacity="0.86"/><circle cx="12.4" cy="152.0" r="0.4" fill="#fff" opacity="0.77"/><circle cx="154.1" cy="95.2" r="0.4" fill="#fff" opacity="0.69"/><circle cx="7.9" cy="82.6" r="0.5" fill="#fff" opacity="0.64"/><circle cx="25.2" cy="93.8" r="0.3" fill="#fff" opacity="0.65"/><circle cx="55.4" cy="172.4" r="0.3" fill="#fff" opacity="0.67"/><circle cx="73.5" cy="87.2" r="0.35" fill="#fff" opacity="0.51"/><circle cx="192.1" cy="10.8" r="0.4" fill="#fff" opacity="0.62"/><circle cx="125.8" cy="159.4" r="0.35" fill="#fff" opacity="0.88"/><circle cx="151.7" cy="191.4" r="0.4" fill="#fff" opacity="0.67"/><circle cx="40.7" cy="163.0" r="0.35" fill="#fff" opacity="0.62"/><circle cx="28.1" cy="127.3" r="0.3" fill="#fff" opacity="0.62"/><circle cx="253.7" cy="112.3" r="0.3" fill="#fff" opacity="0.70"/><circle cx="91.0" cy="80.3" r="0.5" fill="#fff" opacity="0.84"/><circle cx="190.8" cy="84.4" r="0.3" fill="#fff" opacity="0.55"/><circle cx="77.6" cy="85.6" r="0.35" fill="#fff" opacity="0.56"/><circle cx="226.3" cy="46.7" r="0.5" fill="#fff" opacity="0.42"/><circle cx="152.1" cy="137.8" r="0.3" fill="#fff" opacity="0.54"/><circle cx="83.6" cy="31.1" r="0.5" fill="#fff" opacity="0.71"/><circle cx="189.9" cy="33.9" r="0.5" fill="#fff" opacity="0.73"/><circle cx="65.8" cy="46.2" r="0.4" fill="#fff" opacity="0.60"/><circle cx="226.6" cy="47.6" r="0.35" fill="#fff" opacity="0.50"/><circle cx="193.2" cy="165.3" r="0.35" fill="#fff" opacity="0.75"/><circle cx="249.5" cy="144.6" r="0.4" fill="#fff" opacity="0.44"/><circle cx="84.0" cy="37.9" r="0.3" fill="#fff" opacity="0.44"/><circle cx="168.4" cy="39.1" r="0.35" fill="#fff" opacity="0.89"/><circle cx="203.5" cy="146.7" r="0.5" fill="#fff" opacity="0.50"/><circle cx="28.0" cy="182.3" r="0.4" fill="#fff" opacity="0.46"/><circle cx="99.4" cy="6.8" r="0.5" fill="#fff" opacity="0.82"/><circle cx="111.8" cy="44.5" r="0.4" fill="#fff" opacity="0.60"/><circle cx="36.3" cy="120.7" r="0.5" fill="#fff" opacity="0.35"/><circle cx="62.0" cy="170.6" r="0.5" fill="#fff" opacity="0.82"/><circle cx="171.0" cy="130.5" r="0.35" fill="#fff" opacity="0.72"/><circle cx="164.2" cy="90.8" r="0.4" fill="#fff" opacity="0.49"/><circle cx="179.4" cy="178.9" r="0.35" fill="#fff" opacity="0.78"/><circle cx="182.6" cy="125.9" r="0.4" fill="#fff" opacity="0.82"/><circle cx="123.6" cy="3.9" r="0.5" fill="#fff" opacity="0.64"/><circle cx="169.2" cy="174.6" r="0.4" fill="#fff" opacity="0.78"/><circle cx="99.5" cy="98.0" r="0.3" fill="#fff" opacity="0.37"/><circle cx="139.1" cy="32.2" r="0.35" fill="#fff" opacity="0.64"/><circle cx="25.9" cy="114.9" r="0.35" fill="#fff" opacity="0.74"/><circle cx="131.1" cy="127.9" r="0.4" fill="#fff" opacity="0.64"/><circle cx="105.0" cy="189.6" r="0.35" fill="#fff" opacity="0.89"/><circle cx="47.1" cy="102.8" r="0.3" fill="#fff" opacity="0.75"/><circle cx="157.2" cy="127.5" r="0.4" fill="#fff" opacity="0.50"/><circle cx="102.3" cy="2.7" r="0.5" fill="#fff" opacity="0.85"/><circle cx="160.9" cy="135.0" r="0.4" fill="#fff" opacity="0.41"/><circle cx="77.7" cy="80.1" r="0.35" fill="#fff" opacity="0.90"/><circle cx="246.0" cy="92.4" r="0.35" fill="#fff" opacity="0.42"/><circle cx="198.8" cy="161.9" r="0.35" fill="#fff" opacity="0.61"/><circle cx="143.9" cy="45.2" r="0.35" fill="#fff" opacity="0.54"/><circle cx="163.5" cy="163.7" r="0.5" fill="#fff" opacity="0.61"/><circle cx="75.4" cy="109.7" r="0.35" fill="#fff" opacity="0.78"/><circle cx="120.2" cy="156.7" r="0.35" fill="#fff" opacity="0.50"/><circle cx="96.3" cy="50.7" r="0.5" fill="#fff" opacity="0.72"/><circle cx="123.3" cy="161.1" r="0.4" fill="#fff" opacity="0.55"/><circle cx="167.5" cy="64.1" r="0.5" fill="#fff" opacity="0.59"/><circle cx="163.1" cy="131.9" r="0.4" fill="#fff" opacity="0.43"/><circle cx="77.6" cy="77.0" r="0.3" fill="#fff" opacity="0.81"/><circle cx="231.9" cy="156.8" r="0.35" fill="#fff" opacity="0.64"/><circle cx="88.4" cy="116.5" r="0.3" fill="#fff" opacity="0.47"/><circle cx="18.4" cy="58.6" r="0.3" fill="#fff" opacity="0.67"/><circle cx="218.7" cy="37.1" r="0.5" fill="#fff" opacity="0.54"/><circle cx="39.1" cy="180.8" r="0.35" fill="#fff" opacity="0.69"/><circle cx="176.1" cy="195.4" r="0.3" fill="#fff" opacity="0.72"/><circle cx="228.8" cy="157.6" r="0.4" fill="#fff" opacity="0.46"/><circle cx="177.4" cy="106.2" r="0.5" fill="#fff" opacity="0.72"/><circle cx="29.9" cy="23.7" r="0.5" fill="#fff" opacity="0.48"/><circle cx="35.7" cy="98.6" r="0.3" fill="#fff" opacity="0.62"/><circle cx="231.8" cy="140.1" r="0.35" fill="#fff" opacity="0.62"/><circle cx="138.1" cy="172.6" r="0.3" fill="#fff" opacity="0.44"/><circle cx="82.1" cy="139.2" r="0.5" fill="#fff" opacity="0.72"/><circle cx="215.2" cy="75.0" r="0.5" fill="#fff" opacity="0.90"/><circle cx="173.0" cy="36.1" r="0.4" fill="#fff" opacity="0.70"/><circle cx="7.3" cy="121.9" r="0.4" fill="#fff" opacity="0.79"/><circle cx="24.1" cy="96.8" r="0.35" fill="#fff" opacity="0.37"/><circle cx="183.9" cy="125.1" r="0.4" fill="#fff" opacity="0.40"/><circle cx="168.7" cy="68.3" r="0.35" fill="#fff" opacity="0.51"/><circle cx="87.5" cy="50.3" r="0.3" fill="#fff" opacity="0.80"/><circle cx="75.0" cy="165.5" r="0.5" fill="#fff" opacity="0.53"/><circle cx="252.0" cy="174.6" r="0.4" fill="#fff" opacity="0.89"/><circle cx="167.6" cy="158.4" r="0.4" fill="#fff" opacity="0.46"/><circle cx="182.6" cy="25.5" r="0.3" fill="#fff" opacity="0.78"/><circle cx="10.3" cy="144.5" r="0.5" fill="#fff" opacity="0.65"/><circle cx="12.7" cy="60.1" r="0.3" fill="#fff" opacity="0.38"/><circle cx="210.4" cy="95.0" r="0.3" fill="#fff" opacity="0.78"/><circle cx="232.9" cy="122.3" r="0.35" fill="#fff" opacity="0.69"/><circle cx="178.3" cy="119.3" r="0.3" fill="#fff" opacity="0.47"/><circle cx="170.8" cy="91.6" r="0.35" fill="#fff" opacity="0.41"/><circle cx="46.4" cy="7.4" r="0.3" fill="#fff" opacity="0.85"/><circle cx="167.9" cy="73.8" r="0.35" fill="#fff" opacity="0.78"/><circle cx="143.9" cy="51.6" r="0.4" fill="#fff" opacity="0.45"/><circle cx="8.8" cy="4.1" r="0.3" fill="#fff" opacity="0.62"/><circle cx="133.7" cy="165.0" r="0.5" fill="#fff" opacity="0.67"/><circle cx="235.2" cy="89.3" r="0.3" fill="#fff" opacity="0.72"/><circle cx="152.0" cy="198.6" r="0.35" fill="#fff" opacity="0.61"/><circle cx="105.6" cy="20.4" r="0.5" fill="#fff" opacity="0.47"/><circle cx="38.9" cy="3.1" r="0.3" fill="#fff" opacity="0.36"/><circle cx="171.4" cy="197.3" r="0.3" fill="#fff" opacity="0.47"/><circle cx="31.1" cy="94.5" r="0.4" fill="#fff" opacity="0.75"/><circle cx="62.0" cy="146.7" r="0.35" fill="#fff" opacity="0.86"/><circle cx="93.7" cy="149.4" r="0.35" fill="#fff" opacity="0.75"/><circle cx="21.6" cy="125.7" r="0.5" fill="#fff" opacity="0.60"/><circle cx="238.7" cy="50.8" r="0.3" fill="#fff" opacity="0.74"/><circle cx="2.9" cy="2.9" r="0.3" fill="#fff" opacity="0.56"/><circle cx="80.0" cy="120.0" r="0.5" fill="#fff" opacity="0.68"/><circle cx="81.0" cy="189.8" r="0.5" fill="#fff" opacity="0.61"/><circle cx="42.6" cy="193.3" r="0.3" fill="#fff" opacity="0.55"/><circle cx="165.1" cy="125.9" r="0.5" fill="#fff" opacity="0.61"/><circle cx="199.2" cy="90.6" r="0.4" fill="#fff" opacity="0.78"/><circle cx="145.1" cy="58.5" r="0.3" fill="#fff" opacity="0.69"/>
<path d="M-20,88 C25,96 70,112 127,126 C165,136 205,146 256,168" fill="none" stroke="#3c8e62" stroke-width="46" opacity="0.62" filter="url(#bl)"/>
<path d="M-15,94 C25,102 70,118 127,130 C165,139 205,150 256,170" fill="none" stroke="#80d8a0" stroke-width="16" opacity="0.62" filter="url(#bl2)"/>
<ellipse cx="127" cy="130" rx="24" ry="14" fill="#a0e8bc" opacity="0.5" filter="url(#bl2)"/>
<ellipse cx="45" cy="104" rx="36" ry="15" fill="#78d098" opacity="0.42" filter="url(#bl2)"/>
<g stroke="#98eab4" stroke-width="4.5" opacity="0.45" filter="url(#bl2)">
<path d="M160,128 L163,160"/><path d="M176,132 L179,170"/><path d="M190,136 L193,176"/><path d="M203,140 L206,180"/><path d="M215,146 L218,183"/><path d="M227,150 L229,184"/><path d="M238,156 L240,182"/><path d="M146,124 L149,152"/>
</g>
<path d="M0,232 L0,181 C60,199 150,208 256,186 L256,232 Z" fill="url(#snow)"/>
<path d="M4.0,110.0 L8.1,119.2 L5.8,122.0 L11.5,128.4 L7.6,131.2 L15.2,137.6 L9.5,140.3 L18.1,146.8 L11.3,149.5 L21.4,156.0 L13.1,158.7 L24.8,165.2 L14.9,167.9 L27.7,174.4 L16.7,177.1 L31.3,183.6 L18.6,186.3 L30.5,190.6 L-22.5,182.5 L-10.6,186.3 L-23.3,183.6 L-8.7,177.1 L-19.7,174.4 L-6.9,167.9 L-16.8,165.2 L-5.1,158.7 L-13.4,156.0 L-3.3,149.5 L-10.1,146.8 L-1.5,140.3 L-7.2,137.6 L0.4,131.2 L-3.5,128.4 L2.2,122.0 L-0.1,119.2Z M19.0,101.0 L23.9,111.8 L21.1,115.1 L28.0,122.6 L23.3,125.9 L31.1,133.5 L25.4,136.7 L35.2,144.3 L27.6,147.5 L38.9,155.1 L29.7,158.4 L43.6,165.9 L31.9,169.2 L47.3,176.7 L34.0,180.0 L50.5,187.6 L36.1,190.8 L50.2,194.1 L-12.2,182.5 L1.9,190.8 L-12.5,187.6 L4.0,180.0 L-9.3,176.7 L6.1,169.2 L-5.6,165.9 L8.3,158.4 L-0.9,155.1 L10.4,147.5 L2.8,144.3 L12.6,136.7 L6.9,133.5 L14.7,125.9 L10.0,122.6 L16.9,115.1 L14.1,111.8Z M31.0,124.0 L35.4,132.3 L32.7,134.8 L38.4,140.7 L34.3,143.2 L41.0,149.0 L36.0,151.5 L44.0,157.3 L37.6,159.8 L46.5,165.7 L39.3,168.2 L49.3,174.0 L40.9,176.5 L52.9,182.3 L42.6,184.8 L55.4,190.7 L44.2,193.2 L55.0,194.9 L7.0,184.4 L17.8,193.2 L6.6,190.7 L19.4,184.8 L9.1,182.3 L21.1,176.5 L12.7,174.0 L22.7,168.2 L15.5,165.7 L24.4,159.8 L18.0,157.3 L26.0,151.5 L21.0,149.0 L27.7,143.2 L23.6,140.7 L29.3,134.8 L26.6,132.3Z M48.0,119.0 L51.9,128.3 L49.8,131.1 L55.3,137.7 L51.7,140.5 L58.4,147.0 L53.5,149.8 L62.3,156.3 L55.4,159.1 L65.6,165.7 L57.2,168.5 L69.4,175.0 L59.1,177.8 L72.4,184.3 L60.9,187.1 L75.9,193.7 L62.8,196.5 L74.9,198.3 L21.1,188.1 L33.2,196.5 L20.1,193.7 L35.1,187.1 L23.6,184.3 L36.9,177.8 L26.6,175.0 L38.8,168.5 L30.4,165.7 L40.6,159.1 L33.7,156.3 L42.5,149.8 L37.6,147.0 L44.3,140.5 L40.7,137.7 L46.2,131.1 L44.1,128.3Z M40.0,136.0 L43.4,143.0 L41.4,145.1 L46.1,150.1 L42.8,152.2 L48.4,157.1 L44.2,159.2 L50.7,164.1 L45.6,166.2 L54.1,171.2 L47.0,173.3 L56.6,178.2 L48.4,180.3 L58.9,185.2 L49.7,187.3 L61.3,192.3 L51.1,194.4 L60.3,195.8 L19.7,187.8 L28.9,194.4 L18.7,192.3 L30.3,187.3 L21.1,185.2 L31.6,180.3 L23.4,178.2 L33.0,173.3 L25.9,171.2 L34.4,166.2 L29.3,164.1 L35.8,159.2 L31.6,157.1 L37.2,152.2 L33.9,150.1 L38.6,145.1 L36.6,143.0Z M64.0,141.0 L67.1,147.9 L65.4,150.0 L69.5,154.9 L66.7,157.0 L72.1,161.8 L68.1,163.9 L74.4,168.8 L69.5,170.8 L77.6,175.7 L70.9,177.8 L79.7,182.6 L72.2,184.7 L82.7,189.6 L73.6,191.6 L84.7,196.5 L75.0,198.6 L84.0,199.8 L44.0,193.0 L53.0,198.6 L43.3,196.5 L54.4,191.6 L45.3,189.6 L55.8,184.7 L48.3,182.6 L57.1,177.8 L50.4,175.7 L58.5,170.8 L53.6,168.8 L59.9,163.9 L55.9,161.8 L61.3,157.0 L58.5,154.9 L62.6,150.0 L60.9,147.9Z M56.0,150.0 L59.4,155.6 L57.1,157.3 L61.3,161.3 L58.2,163.0 L62.4,166.9 L59.3,168.6 L64.6,172.5 L60.5,174.2 L67.4,178.2 L61.6,179.9 L69.0,183.8 L62.7,185.5 L71.6,189.5 L63.8,191.1 L73.0,195.1 L64.9,196.8 L72.2,197.9 L39.8,192.2 L47.1,196.8 L39.0,195.1 L48.2,191.1 L40.4,189.5 L49.3,185.5 L43.0,183.8 L50.4,179.9 L44.6,178.2 L51.5,174.2 L47.4,172.5 L52.7,168.6 L49.6,166.9 L53.8,163.0 L50.7,161.3 L54.9,157.3 L52.6,155.6Z M75.0,160.0 L77.1,164.8 L75.9,166.2 L79.4,169.6 L76.9,171.0 L81.3,174.4 L77.8,175.8 L82.5,179.2 L78.8,180.6 L84.0,184.0 L79.7,185.4 L86.0,188.8 L80.7,190.2 L88.4,193.5 L81.6,195.0 L89.9,198.3 L82.6,199.8 L88.8,200.6 L61.2,196.0 L67.4,199.8 L60.1,198.3 L68.4,195.0 L61.6,193.5 L69.3,190.2 L64.0,188.8 L70.3,185.4 L66.0,184.0 L71.2,180.6 L67.5,179.2 L72.2,175.8 L68.7,174.4 L73.1,171.0 L70.6,169.6 L74.1,166.2 L72.9,164.8Z M86.0,168.0 L87.9,172.0 L86.8,173.2 L89.5,176.0 L87.6,177.2 L90.8,180.1 L88.4,181.3 L92.2,184.1 L89.2,185.3 L94.4,188.1 L90.0,189.3 L95.2,192.1 L90.8,193.3 L97.0,196.1 L91.6,197.4 L98.4,200.2 L92.4,201.4 L97.6,202.1 L74.4,198.2 L79.6,201.4 L73.6,200.2 L80.4,197.4 L75.0,196.1 L81.2,193.3 L76.8,192.1 L82.0,189.3 L77.6,188.1 L82.8,185.3 L79.8,184.1 L83.6,181.3 L81.2,180.1 L84.4,177.2 L82.5,176.0 L85.2,173.2 L84.1,172.0Z M95.0,174.0 L96.8,177.5 L95.7,178.5 L98.6,180.9 L96.4,182.0 L99.2,184.4 L97.1,185.4 L101.0,187.8 L97.7,188.9 L101.7,191.3 L98.4,192.3 L103.2,194.8 L99.1,195.8 L104.2,198.2 L99.8,199.2 L105.6,201.7 L100.5,202.7 L105.0,203.0 L85.0,200.0 L89.5,202.7 L84.4,201.7 L90.2,199.2 L85.8,198.2 L90.9,195.8 L86.8,194.8 L91.6,192.3 L88.3,191.3 L92.3,188.9 L89.0,187.8 L92.9,185.4 L90.8,184.4 L93.6,182.0 L91.4,180.9 L94.3,178.5 L93.2,177.5Z M103.0,178.0 L105.5,181.1 L103.6,182.0 L106.4,184.2 L104.2,185.1 L107.0,187.3 L104.8,188.2 L108.7,190.4 L105.5,191.3 L109.1,193.5 L106.1,194.4 L110.4,196.6 L106.7,197.5 L112.1,199.7 L107.3,200.6 L112.9,202.8 L107.9,203.7 L111.9,203.7 L94.1,201.5 L98.1,203.7 L93.1,202.8 L98.7,200.6 L93.9,199.7 L99.3,197.5 L95.6,196.6 L99.9,194.4 L96.9,193.5 L100.5,191.3 L97.3,190.4 L101.2,188.2 L99.0,187.3 L101.8,185.1 L99.6,184.2 L102.4,182.0 L100.5,181.1Z M111.0,184.0 L112.3,186.4 L111.5,187.2 L114.2,188.9 L112.0,189.6 L114.2,191.3 L112.5,192.1 L115.1,193.8 L112.9,194.5 L116.6,196.2 L113.4,197.0 L117.0,198.7 L113.9,199.4 L117.8,201.2 L114.4,201.9 L118.4,203.6 L114.9,204.3 L118.1,204.3 L103.9,202.9 L107.1,204.3 L103.6,203.6 L107.6,201.9 L104.2,201.2 L108.1,199.4 L105.0,198.7 L108.6,197.0 L105.4,196.2 L109.1,194.5 L106.9,193.8 L109.5,192.1 L107.8,191.3 L110.0,189.6 L107.8,188.9 L110.5,187.2 L109.7,186.4Z M118.0,188.0 L119.1,190.0 L118.4,190.6 L120.4,192.1 L118.8,192.7 L120.8,194.1 L119.2,194.7 L121.9,196.2 L119.6,196.8 L122.4,198.2 L120.0,198.8 L123.2,200.2 L120.4,200.8 L124.5,202.3 L120.8,202.9 L124.7,204.3 L121.2,204.9 L123.9,204.9 L112.1,203.7 L114.8,204.9 L111.3,204.3 L115.2,202.9 L111.5,202.3 L115.6,200.8 L112.8,200.2 L116.0,198.8 L113.6,198.2 L116.4,196.8 L114.1,196.2 L116.8,194.7 L115.2,194.1 L117.2,192.7 L115.6,192.1 L117.6,190.6 L116.9,190.0Z M126.0,191.0 L127.6,192.8 L126.3,193.3 L128.5,194.5 L126.7,195.1 L128.4,196.3 L127.0,196.8 L129.0,198.1 L127.4,198.6 L130.5,199.8 L127.7,200.3 L131.0,201.6 L128.1,202.1 L131.0,203.3 L128.4,203.9 L131.6,205.1 L128.8,205.6 L131.1,205.5 L120.9,204.6 L123.2,205.6 L120.4,205.1 L123.6,203.9 L121.0,203.3 L123.9,202.1 L121.0,201.6 L124.3,200.3 L121.5,199.8 L124.6,198.6 L123.0,198.1 L125.0,196.8 L123.6,196.3 L125.3,195.1 L123.5,194.5 L125.7,193.3 L124.4,192.8Z M134.0,194.0 L135.6,195.4 L134.3,195.8 L136.4,196.8 L134.6,197.3 L136.1,198.3 L134.8,198.7 L137.4,199.7 L135.1,200.1 L137.8,201.1 L135.4,201.5 L138.0,202.5 L135.7,203.0 L138.3,203.9 L136.0,204.4 L138.5,205.4 L136.3,205.8 L138.1,205.2 L129.9,205.5 L131.7,205.8 L129.5,205.4 L132.0,204.4 L129.7,203.9 L132.3,203.0 L130.0,202.5 L132.6,201.5 L130.2,201.1 L132.9,200.1 L130.6,199.7 L133.2,198.7 L131.9,198.3 L133.4,197.3 L131.6,196.8 L133.7,195.8 L132.4,195.4Z M0,150 L10,150 L30,165 L48,160 L64,178 L80,185 L100,193 L120,200 L140,203 L140,205.2 L130,205.5 L120,204.5 L110,203.5 L100,202.5 L90,200.8 L80,199.2 L70,197.5 L60,195.8 L50,194.0 L40,192.3 L30,190.5 L20,187.8 L10,185.2 L0,182.5 Z M110,201.0 L130,199.0 L150,199.0 L170,198.0 L190,196.0 L210,192.0 L230,187.0 L256,177.0 L256,187.5 L246,190.6 L236,193.7 L226,196.2 L216,197.8 L206,199.5 L196,200.9 L186,201.9 L176,202.9 L166,203.9 L156,204.6 L146,205.0 L136,205.3 L126,205.1 L116,204.1 Z" fill="#08080a"/>
</svg><div style="position:absolute;left:0;top:317px;width:256px;height:53.5px;background:#000"></div><div style="position:absolute;left:0;top:370.5px;width:256px;height:184px;background:#e9e9e9"></div></div><div style="position:absolute;left:968.2px;top:253px;width:258px;height:555.3px;border:1.2px solid #3a3a3a;border-radius:34px;box-sizing:border-box"></div><div style="position:absolute;left:797px;width:600px;text-align:center;top:291.89px;font-size:11px;line-height:11px;color:#ffffff;font-weight:bold;letter-spacing:0px;white-space:nowrap;">Northern Lights</div><svg style="position:absolute;left:1200px;top:289.5px;" width="14" height="15" viewBox="0 0 14 15"><circle cx="7" cy="4.2" r="3.2" fill="none" stroke="#fff" stroke-width="1.1"/><path d="M1,14 Q1,8.5 7,8.5 Q13,8.5 13,14 Z" fill="none" stroke="#fff" stroke-width="1.1"/></svg><div style="position:absolute;left:982px;top:329.52px;font-size:8.6px;line-height:8.6px;color:#2e2e2e;font-weight:bold;letter-spacing:0px;white-space:nowrap;">Prototype Cells</div><svg style="position:absolute;left:991px;top:584px;" width="15" height="12.5" viewBox="0 0 15 12.5"><path d="M7.5,12 C3,8.5 0.5,6.5 0.5,3.8 C0.5,1.8 2,0.4 3.9,0.4 C5.4,0.4 6.8,1.3 7.5,2.6 C8.2,1.3 9.6,0.4 11.1,0.4 C13,0.4 14.5,1.8 14.5,3.8 C14.5,6.5 12,8.5 7.5,12 Z" fill="#e3232b"/></svg><div style="position:absolute;left:1005.8px;top:585.87px;font-size:10.2px;line-height:10.2px;color:#fff;font-weight:normal;letter-spacing:0px;white-space:nowrap;">240</div><svg style="position:absolute;left:1050.4px;top:582.2px;" width="17.2" height="16.6" viewBox="0 0 17.2 16.6"><rect width="17.2" height="16.6" fill="#7a8ca6"/><rect y="0" width="17.2" height="6" fill="#a8b8cc"/><ellipse cx="8.6" cy="8" rx="4" ry="4.6" fill="#c89888"/><path d="M1,16.6 Q2,11.5 8.6,11.5 Q15,11.5 16.2,16.6 Z" fill="#2a3040"/><path d="M4.8,6 Q8.6,2 12.4,6" fill="#3a2a20"/></svg><div style="position:absolute;left:1073.7px;top:585.87px;font-size:10.2px;line-height:10.2px;color:#fff;font-weight:normal;letter-spacing:-0.05px;white-space:nowrap;">Vincent Guth</div><svg style="position:absolute;left:1194.5px;top:582.5px;" width="15" height="15" viewBox="0 0 15 15"><path d="M7.5,1 L7.5,10 M4.3,7 L7.5,10.2 L10.7,7 M1,10 L1,13.5 L14,13.5 L14,10" fill="none" stroke="#5a5a5a" stroke-width="1"/></svg><div style="position:absolute;left:1092.4px;top:604.7px;width:9px;height:9.6px;background:#cfcfcf;border:0.6px solid #999;box-sizing:border-box"></div><div style="position:absolute;left:797px;width:600px;text-align:center;top:698.16px;font-size:18px;line-height:18px;color:#9b9b9b;font-weight:normal;letter-spacing:0.12px;white-space:nowrap;-webkit-text-stroke:0.35px #9b9b9b">Table View</div><div style="position:absolute;left:797px;width:600px;text-align:center;top:723.51px;font-size:11.8px;line-height:11.8px;color:#a5a5a5;font-weight:normal;letter-spacing:0px;white-space:nowrap;-webkit-text-stroke:0.15px #a5a5a5">Prototype Content</div><div style="position:absolute;left:1051px;top:799.3px;width:92px;height:3.2px;background:#111;border-radius:2px"></div><div style="position:absolute;left:1226px;top:530.5px;width:112px;height:1.4px;background:#8e8e8e"></div><svg style="position:absolute;left:1328px;top:521px;" width="12" height="21" viewBox="0 0 12 21"><path d="M1,1 L10.5,10.5 L1,20" fill="none" stroke="#8e8e8e" stroke-width="1.6"/></svg><div style="position:absolute;left:1274px;top:521.5px;width:19px;height:19px;background:#f2f2f2;border-radius:50%"></div><svg style="position:absolute;left:1274.2px;top:522px;" width="19" height="19" viewBox="0 0 18 18"><circle cx="9" cy="9" r="8.4" fill="none" stroke="#8e8e8e" stroke-width="1.2"/><rect x="6" y="4.8" width="6" height="8.4" rx="1" fill="none" stroke="#8e8e8e" stroke-width="1.1"/></svg><div style="position:absolute;left:1341.5px;top:225.5px;width:260px;height:21px;background:#fff;border:1px solid #d3d3d3;border-radius:4px;box-sizing:border-box"></div><div style="position:absolute;right:408px;top:231.95px;font-size:8.8px;line-height:8.8px;color:#555;font-weight:bold;letter-spacing:0px;white-space:nowrap;">Navigation Controller</div><div style="position:absolute;left:1341.5px;top:253px;width:260px;height:555px;background:#e9e9e9;border:1.2px solid #4a4a4a;border-radius:34px;box-sizing:border-box;overflow:hidden"><div style="position:absolute;left:0;top:0;width:260px;height:36.5px;background:#000"></div></div><div style="position:absolute;left:1382px;top:547.46px;font-size:18px;line-height:18px;color:#9b9b9b;font-weight:normal;letter-spacing:0.15px;white-space:nowrap;-webkit-text-stroke:0.3px #9b9b9b">Navigation Controller</div><div style="position:absolute;left:1424.6px;top:799.3px;width:92px;height:3.2px;background:#111;border-radius:2px"></div><div style="position:absolute;left:600px;top:799.3px;width:150px;height:3.2px;background:#111;border-radius:2px"></div><div style="position:absolute;left:1281.3px;top:216.8px;width:205.5px;height:263.6px;background:#e4e4e4;border:1px solid #c9c9c9;border-radius:11px;box-sizing:border-box;box-shadow:0 4px 14px rgba(0,0,0,0.12)"></div><svg style="position:absolute;left:1304.4px;top:237.4px;border-radius:3.5px;overflow:hidden" width="29" height="62" viewBox="0 0 29 62"><rect width="29" height="62" rx="3" fill="#97969d"/><rect x="2" y="40" width="25" height="2.2" rx="1" fill="#a0b0d0"/><rect x="2" y="44" width="25" height="2.2" rx="1" fill="#e0a89c"/><g fill="#cfcfcf"><rect x="4" y="8" width="8" height="1"/><rect x="4" y="11" width="14" height="1"/><rect x="9" y="56" width="10" height="1"/></g></svg><svg style="position:absolute;left:1344.6px;top:237.4px;border-radius:3.5px;overflow:hidden" width="29" height="62" viewBox="0 0 29 62"><rect width="29" height="62" rx="3" fill="#f5f5f5"/><rect width="29" height="3" fill="#8a8a8a"/><rect x="6" y="30" width="17" height="1" fill="#d0d0d0"/></svg><svg style="position:absolute;left:1388px;top:237.4px;border-radius:3.5px;overflow:hidden" width="29" height="62" viewBox="0 0 29 62"><rect width="29" height="62" rx="3" fill="#97969d"/><rect width="29" height="3" fill="#a4a4a4"/><rect x="2" y="19" width="25" height="3" rx="1.5" fill="#a8e0bc"/><path d="M0,40 L6,28 L14,45 L29,50 L29,62 L0,62 Z" fill="#8c8b92"/></svg><svg style="position:absolute;left:1428.5px;top:237.4px;border-radius:3.5px;overflow:hidden" width="29" height="62" viewBox="0 0 29 62"><rect width="29" height="62" rx="3" fill="#97969d"/><rect width="29" height="3" fill="#a4a4a4"/><rect x="2" y="19" width="25" height="3" rx="1.5" fill="#a8e0bc"/><path d="M0,40 L6,28 L14,45 L29,50 L29,62 L0,62 Z" fill="#8c8b92"/></svg><svg style="position:absolute;left:1344.6px;top:316.2px;border-radius:3.5px;overflow:hidden" width="29" height="62" viewBox="0 0 29 62"><rect width="29" height="62" rx="3" fill="#f5f5f5"/><rect width="29" height="3" fill="#8a8a8a"/><rect x="6" y="30" width="17" height="1" fill="#d0d0d0"/></svg><svg style="position:absolute;left:1388px;top:316.2px;border-radius:3.5px;overflow:hidden" width="29" height="62" viewBox="0 0 29 62"><rect width="29" height="62" rx="3" fill="#97969d"/><rect width="29" height="3" fill="#a4a4a4"/><rect x="2" y="19" width="25" height="3" rx="1.5" fill="#a8e0bc"/><path d="M0,40 L6,28 L14,45 L29,50 L29,62 L0,62 Z" fill="#8c8b92"/></svg><svg style="position:absolute;left:1302.4px;top:394.2px;border-radius:3.5px;overflow:hidden" width="29" height="62" viewBox="0 0 29 62"><rect width="29" height="62" rx="3" fill="#f0f0f0"/><rect x="8" y="0" width="13" height="2" fill="#9a9a9a"/><rect x="6" y="30" width="17" height="1" fill="#dadada"/></svg><svg style="position:absolute;left:1346px;top:394.2px;border-radius:3.5px;overflow:hidden" width="29" height="62" viewBox="0 0 29 62"><defs><filter id="tb" x="-50%" y="-50%" width="200%" height="200%"><feGaussianBlur stdDeviation="0.8"/></filter><linearGradient id="tsky" x1="0" y1="0" x2="0" y2="1"><stop offset="0" stop-color="#2a2438"/><stop offset="1" stop-color="#5a4a5a"/></linearGradient></defs><rect width="29" height="62" fill="#e9e9e9"/><rect width="29" height="37" fill="url(#tsky)"/><rect width="29" height="9" fill="#000"/><rect x="7" y="3.5" width="15" height="1.2" fill="#bbb"/><path d="M0,20 C8,21 18,26 29,33" stroke="#78d898" stroke-width="3.2" fill="none" opacity="0.85" filter="url(#tb)"/><path d="M0,24 L3,21 L6,27 L9,26 L13,31 L18,33 L29,34 L29,35 L0,35 Z" fill="#111"/><rect y="33" width="29" height="4" fill="#4a4452"/><rect y="37" width="29" height="4" fill="#000"/><rect x="2" y="38.2" width="2" height="1.6" fill="#e33"/><rect x="9" y="38.2" width="4" height="1.6" fill="#aaa"/><rect x="10" y="50" width="9" height="0.8" fill="#999"/><rect x="10" y="52" width="9" height="0.6" fill="#bbb"/></svg><svg style="position:absolute;left:1388px;top:394.2px;border-radius:3.5px;overflow:hidden" width="29" height="62" viewBox="0 0 29 62"><rect width="29" height="62" rx="3" fill="#f2f2f2"/><rect width="29" height="3" fill="#000"/><rect x="6" y="30" width="17" height="1" fill="#cfcfcf"/></svg><svg style="position:absolute;left:1433.3px;top:394.2px;border-radius:3.5px;overflow:hidden" width="29" height="62" viewBox="0 0 29 62"><rect width="29" height="62" rx="3" fill="#aab8cc"/><rect width="29" height="3.5" fill="#a4a4a4"/><rect x="5" y="12" width="19" height="16" fill="#c8daf0"/><path d="M0,38 L14,32 L29,38 L29,62 L0,62 Z" fill="#98a8c0"/><rect x="3" y="54" width="23" height="3" fill="#98d8a8"/></svg><div style="position:absolute;left:1323.5px;top:386.6px;width:84px;height:77px;border:1.2px solid #8a8a8a;border-radius:3px;box-sizing:border-box;box-shadow:0 3px 10px rgba(0,0,0,0.12)"></div></div><svg style="position:absolute;left:786px;top:880.5px;" width="18" height="17" viewBox="0 0 18 17"><rect x="0.8" y="0.8" width="16.4" height="15.4" rx="3" fill="none" stroke="#6e6e6e" stroke-width="1.2"/><rect x="3" y="3" width="3.5" height="11" rx="1" fill="#6e6e6e"/></svg><svg style="position:absolute;left:817px;top:880.5px;" width="18" height="18" viewBox="0 0 18 18"><circle cx="9" cy="9" r="8.2" fill="none" stroke="#6e6e6e" stroke-width="1.2"/><circle cx="9" cy="4.6" r="1.1" fill="#6e6e6e"/><path d="M4.5,6.8 L13.5,6.8 M9,6.8 L9,10.5 M9,10.5 L6.8,14.5 M9,10.5 L11.2,14.5" stroke="#6e6e6e" stroke-width="1.1" fill="none"/></svg><svg style="position:absolute;left:850px;top:880.5px;" width="18" height="18" viewBox="0 0 18 18"><circle cx="9" cy="9" r="8.2" fill="none" stroke="#6e6e6e" stroke-width="1.4"/><path d="M9,1 A8,8 0 0,0 9,17 Z" fill="#6e6e6e"/><path d="M9,5 A4,4 0 0,1 9,13 Z" fill="#6e6e6e"/></svg><svg style="position:absolute;left:884.5px;top:878px;" width="19" height="20" viewBox="0 0 19 20"><rect x="0.8" y="7" width="11.5" height="11.5" rx="1.5" fill="none" stroke="#6e6e6e" stroke-width="1.3"/><path d="M11,2.5 Q17,2.5 17,8" fill="none" stroke="#6e6e6e" stroke-width="1.2"/><path d="M12.5,0.5 L10.5,2.5 L12.5,4.5" fill="none" stroke="#6e6e6e" stroke-width="1.1"/></svg><svg style="position:absolute;left:915.5px;top:880.5px;" width="18" height="17" viewBox="0 0 18 17"><rect x="0.8" y="0.8" width="16.4" height="15.4" rx="2" fill="none" stroke="#c4c4c4" stroke-width="1.2"/><path d="M9,0.8 L9,16.2" stroke="#c4c4c4" stroke-width="1.2"/></svg><svg style="position:absolute;left:951.5px;top:879px;" width="15" height="20" viewBox="0 0 15 20"><rect x="0.8" y="0.8" width="13.4" height="18.4" rx="2.5" fill="none" stroke="#6e6e6e" stroke-width="1.3"/><path d="M5,2.5 L10,2.5 M5.5,17 L9.5,17" stroke="#6e6e6e" stroke-width="1"/></svg><div style="position:absolute;left:983.5px;top:881.86px;font-size:14.7px;line-height:14.7px;color:#6a686c;font-weight:normal;letter-spacing:0px;white-space:nowrap;">iPhone 13 Pro</div><svg style="position:absolute;left:1104.5px;top:879.5px;" width="20" height="20" viewBox="0 0 20 20"><circle cx="7.8" cy="7.8" r="6.8" fill="none" stroke="#6e6e6e" stroke-width="1.3"/><path d="M12.8,12.8 L18.5,18.5" stroke="#6e6e6e" stroke-width="1.5"/><path d="M4.5,7.8 L11,7.8" stroke="#6e6e6e" stroke-width="1.3"/></svg><div style="position:absolute;left:1143.2px;top:881.86px;font-size:14.7px;line-height:14.7px;color:#6a686c;font-weight:normal;letter-spacing:0.2px;white-space:nowrap;">50%</div><svg style="position:absolute;left:1191.5px;top:879.5px;" width="20" height="20" viewBox="0 0 20 20"><circle cx="7.8" cy="7.8" r="6.8" fill="none" stroke="#6e6e6e" stroke-width="1.3"/><path d="M12.8,12.8 L18.5,18.5" stroke="#6e6e6e" stroke-width="1.5"/><path d="M4.5,7.8 L11,7.8 M7.8,4.5 L7.8,11" stroke="#6e6e6e" stroke-width="1.3"/></svg><svg style="position:absolute;left:1340.8px;top:879px;" width="20" height="20" viewBox="0 0 20 20"><path d="M1,5 L1,1 L5,1 M15,1 L19,1 L19,5 M19,15 L19,19 L15,19 M5,19 L1,19 L1,15" fill="none" stroke="#bdbdbd" stroke-width="1.2"/><path d="M14,8 A4.5,4.5 0 1,0 13,13" fill="none" stroke="#bdbdbd" stroke-width="1.2"/><path d="M11,12 L13,13.5 L12,15.5" fill="none" stroke="#bdbdbd" stroke-width="1"/></svg><svg style="position:absolute;left:1374.8px;top:878.5px;" width="20" height="20" viewBox="0 0 20 20"><path d="M1,0.5 L1,19.5" stroke="#6e6e6e" stroke-width="1.3"/><rect x="3.5" y="3" width="11" height="5" fill="none" stroke="#6e6e6e" stroke-width="1.2"/><rect x="3.5" y="11" width="15" height="5" fill="none" stroke="#6e6e6e" stroke-width="1.2"/></svg><svg style="position:absolute;left:1408.7px;top:878.5px;" width="20" height="20" viewBox="0 0 20 20"><rect x="6" y="6" width="8" height="8" fill="none" stroke="#6e6e6e" stroke-width="1.2"/><path d="M10,1 L10,6 M10,14 L10,19 M1,10 L6,10 M14,10 L19,10 M8,1 L12,1 M8,19 L12,19 M1,8 L1,12 M19,8 L19,12" stroke="#6e6e6e" stroke-width="1.1"/></svg><svg style="position:absolute;left:1442.4px;top:880px;" width="20" height="17" viewBox="0 0 20 17"><path d="M10,2 L16,13 L4,13 Z" fill="none" stroke="#6e6e6e" stroke-width="1.2"/><circle cx="10" cy="9.5" r="1.3" fill="#6e6e6e"/><path d="M1,8.5 L4,8.5 M16,8.5 L19,8.5 M1,6.5 L1,10.5 M19,6.5 L19,10.5" stroke="#6e6e6e" stroke-width="1.1"/></svg><svg style="position:absolute;left:1479px;top:879.5px;" width="20" height="19" viewBox="0 0 20 19"><path d="M6,4 L1,4 L1,18 L19,18 L19,4 L14,4" fill="none" stroke="#6e6e6e" stroke-width="1.3"/><path d="M10,1 L10,11 M6.5,7.5 L10,11 L13.5,7.5" fill="none" stroke="#6e6e6e" stroke-width="1.3"/></svg><svg style="position:absolute;left:430px;top:201.7px;" width="8" height="12" viewBox="0 0 8 12"><path d="M1,1 L7,6.0 L1,11" fill="none" stroke="#58565a" stroke-width="1.5" stroke-linecap="round" stroke-linejoin="round"/></svg><svg style="position:absolute;left:447.3px;top:198.0px;" width="18.5" height="18.5" viewBox="0 0 18.5 18.5"><rect x="0.5" y="0.5" width="17.5" height="17.5" rx="3" fill="#fdb300"/><path d="M3,3.8 L4.5,1.8 M6.5,3.8 L8,1.8 M10,3.8 L11.5,1.8 M13.5,3.8 L15,1.8" stroke="#fff" stroke-width="1.1"/><rect x="2.2" y="5.3" width="14.1" height="10.6" rx="1" fill="#fff"/><rect x="5.8" y="9.2" width="6.9" height="3" rx="0.5" fill="none" stroke="#fdb300" stroke-width="1.1"/></svg><div style="position:absolute;left:471.7px;top:200.36px;font-size:14.7px;line-height:14.7px;color:#3a383c;font-weight:bold;letter-spacing:0.05px;white-space:nowrap;">Welcome View Controller Scene</div><div style="position:absolute;left:435.5px;top:229.6px;width:325px;height:1.5px;background:#cdcdcd"></div><svg style="position:absolute;left:430px;top:240.79999999999998px;" width="8" height="12" viewBox="0 0 8 12"><path d="M1,1 L7,6.0 L1,11" fill="none" stroke="#58565a" stroke-width="1.5" stroke-linecap="round" stroke-linejoin="round"/></svg><svg style="position:absolute;left:447.3px;top:237.1px;" width="18.5" height="18.5" viewBox="0 0 18.5 18.5"><rect x="0.5" y="0.5" width="17.5" height="17.5" rx="3" fill="#fdb300"/><path d="M3,3.8 L4.5,1.8 M6.5,3.8 L8,1.8 M10,3.8 L11.5,1.8 M13.5,3.8 L15,1.8" stroke="#fff" stroke-width="1.1"/><rect x="2.2" y="5.3" width="14.1" height="10.6" rx="1" fill="#fff"/><rect x="5.8" y="9.2" width="6.9" height="3" rx="0.5" fill="none" stroke="#fdb300" stroke-width="1.1"/></svg><div style="position:absolute;left:471.7px;top:239.46px;font-size:14.7px;line-height:14.7px;color:#3a383c;font-weight:bold;letter-spacing:0.05px;white-space:nowrap;">Log In Scene</div><div style="position:absolute;left:435.5px;top:268.7px;width:325px;height:1.5px;background:#cdcdcd"></div><svg style="position:absolute;left:430px;top:279.9px;" width="8" height="12" viewBox="0 0 8 12"><path d="M1,1 L7,6.0 L1,11" fill="none" stroke="#58565a" stroke-width="1.5" stroke-linecap="round" stroke-linejoin="round"/></svg><svg style="position:absolute;left:447.3px;top:276.2px;" width="18.5" height="18.5" viewBox="0 0 18.5 18.5"><rect x="0.5" y="0.5" width="17.5" height="17.5" rx="3" fill="#fdb300"/><path d="M3,3.8 L4.5,1.8 M6.5,3.8 L8,1.8 M10,3.8 L11.5,1.8 M13.5,3.8 L15,1.8" stroke="#fff" stroke-width="1.1"/><rect x="2.2" y="5.3" width="14.1" height="10.6" rx="1" fill="#fff"/><rect x="5.8" y="9.2" width="6.9" height="3" rx="0.5" fill="none" stroke="#fdb300" stroke-width="1.1"/></svg><div style="position:absolute;left:471.7px;top:278.56px;font-size:14.7px;line-height:14.7px;color:#3a383c;font-weight:bold;letter-spacing:0.05px;white-space:nowrap;">Sign Up View Controller Scene</div><div style="position:absolute;left:435.5px;top:307.79999999999995px;width:325px;height:1.5px;background:#cdcdcd"></div><svg style="position:absolute;left:430px;top:319.0px;" width="8" height="12" viewBox="0 0 8 12"><path d="M1,1 L7,6.0 L1,11" fill="none" stroke="#58565a" stroke-width="1.5" stroke-linecap="round" stroke-linejoin="round"/></svg><svg style="position:absolute;left:447.3px;top:315.3px;" width="18.5" height="18.5" viewBox="0 0 18.5 18.5"><rect x="0.5" y="0.5" width="17.5" height="17.5" rx="3" fill="#fdb300"/><path d="M3,3.8 L4.5,1.8 M6.5,3.8 L8,1.8 M10,3.8 L11.5,1.8 M13.5,3.8 L15,1.8" stroke="#fff" stroke-width="1.1"/><rect x="2.2" y="5.3" width="14.1" height="10.6" rx="1" fill="#fff"/><rect x="5.8" y="9.2" width="6.9" height="3" rx="0.5" fill="none" stroke="#fdb300" stroke-width="1.1"/></svg><div style="position:absolute;left:471.7px;top:317.66px;font-size:14.7px;line-height:14.7px;color:#3a383c;font-weight:bold;letter-spacing:0.05px;white-space:nowrap;">Reset Password View Controller Sc...</div><div style="position:absolute;left:435.5px;top:346.9px;width:325px;height:1.5px;background:#cdcdcd"></div><svg style="position:absolute;left:430px;top:358.1px;" width="8" height="12" viewBox="0 0 8 12"><path d="M1,1 L7,6.0 L1,11" fill="none" stroke="#58565a" stroke-width="1.5" stroke-linecap="round" stroke-linejoin="round"/></svg><svg style="position:absolute;left:447.3px;top:354.40000000000003px;" width="18.5" height="18.5" viewBox="0 0 18.5 18.5"><rect x="0.5" y="0.5" width="17.5" height="17.5" rx="3" fill="#fdb300"/><path d="M3,3.8 L4.5,1.8 M6.5,3.8 L8,1.8 M10,3.8 L11.5,1.8 M13.5,3.8 L15,1.8" stroke="#fff" stroke-width="1.1"/><path d="M6.5,8 L15,8 Q16,8 16,9 L16,14 Q16,15 15,15 L6.5,15 L3.5,11.5 Z" fill="#fff"/></svg><div style="position:absolute;left:471.7px;top:356.76px;font-size:14.7px;line-height:14.7px;color:#3a383c;font-weight:bold;letter-spacing:0.05px;white-space:nowrap;">Navigation Controller Scene</div><div style="position:absolute;left:435.5px;top:386.0px;width:325px;height:1.5px;background:#cdcdcd"></div><svg style="position:absolute;left:430px;top:397.2px;" width="8" height="12" viewBox="0 0 8 12"><path d="M1,1 L7,6.0 L1,11" fill="none" stroke="#58565a" stroke-width="1.5" stroke-linecap="round" stroke-linejoin="round"/></svg><svg style="position:absolute;left:447.3px;top:393.5px;" width="18.5" height="18.5" viewBox="0 0 18.5 18.5"><rect x="0.5" y="0.5" width="17.5" height="17.5" rx="3" fill="#fdb300"/><path d="M3,3.8 L4.5,1.8 M6.5,3.8 L8,1.8 M10,3.8 L11.5,1.8 M13.5,3.8 L15,1.8" stroke="#fff" stroke-width="1.1"/><path d="M6.5,8 L15,8 Q16,8 16,9 L16,14 Q16,15 15,15 L6.5,15 L3.5,11.5 Z" fill="#fff"/></svg><div style="position:absolute;left:471.7px;top:395.86px;font-size:14.7px;line-height:14.7px;color:#3a383c;font-weight:bold;letter-spacing:0.05px;white-space:nowrap;">Navigation Controller Scene</div><div style="position:absolute;left:435.5px;top:425.09999999999997px;width:325px;height:1.5px;background:#cdcdcd"></div><svg style="position:absolute;left:430px;top:436.3px;" width="8" height="12" viewBox="0 0 8 12"><path d="M1,1 L7,6.0 L1,11" fill="none" stroke="#58565a" stroke-width="1.5" stroke-linecap="round" stroke-linejoin="round"/></svg><svg style="position:absolute;left:447.3px;top:432.6px;" width="18.5" height="18.5" viewBox="0 0 18.5 18.5"><rect x="0.5" y="0.5" width="17.5" height="17.5" rx="3" fill="#fdb300"/><path d="M3,3.8 L4.5,1.8 M6.5,3.8 L8,1.8 M10,3.8 L11.5,1.8 M13.5,3.8 L15,1.8" stroke="#fff" stroke-width="1.1"/><rect x="2.2" y="5.3" width="14.1" height="10.6" rx="1" fill="#fff"/><rect x="5.8" y="9.2" width="6.9" height="3" rx="0.5" fill="none" stroke="#fdb300" stroke-width="1.1"/></svg><div style="position:absolute;left:471.7px;top:434.96px;font-size:14.7px;line-height:14.7px;color:#3a383c;font-weight:bold;letter-spacing:0.05px;white-space:nowrap;">Profile View Controller Scene</div><div style="position:absolute;left:435.5px;top:464.2px;width:325px;height:1.5px;background:#cdcdcd"></div><svg style="position:absolute;left:430px;top:475.4px;" width="8" height="12" viewBox="0 0 8 12"><path d="M1,1 L7,6.0 L1,11" fill="none" stroke="#58565a" stroke-width="1.5" stroke-linecap="round" stroke-linejoin="round"/></svg><svg style="position:absolute;left:447.3px;top:471.7px;" width="18.5" height="18.5" viewBox="0 0 18.5 18.5"><rect x="0.5" y="0.5" width="17.5" height="17.5" rx="3" fill="#fdb300"/><path d="M3,3.8 L4.5,1.8 M6.5,3.8 L8,1.8 M10,3.8 L11.5,1.8 M13.5,3.8 L15,1.8" stroke="#fff" stroke-width="1.1"/><path d="M6.5,8 L15,8 Q16,8 16,9 L16,14 Q16,15 15,15 L6.5,15 L3.5,11.5 Z" fill="#fff"/></svg><div style="position:absolute;left:471.7px;top:474.06px;font-size:14.7px;line-height:14.7px;color:#3a383c;font-weight:bold;letter-spacing:0.05px;white-space:nowrap;">Navigation Controller Scene</div><div style="position:absolute;left:435.5px;top:503.29999999999995px;width:325px;height:1.5px;background:#cdcdcd"></div><svg style="position:absolute;left:428.5px;top:516.5px;" width="12" height="7.5" viewBox="0 0 12 7.5"><path d="M1,1 L6.0,6.5 L11,1" fill="none" stroke="#58565a" stroke-width="1.5" stroke-linecap="round" stroke-linejoin="round"/></svg><svg style="position:absolute;left:447.3px;top:510.8px;" width="18.5" height="18.5" viewBox="0 0 18.5 18.5"><rect x="0.5" y="0.5" width="17.5" height="17.5" rx="3" fill="#fdb300"/><path d="M3,3.8 L4.5,1.8 M6.5,3.8 L8,1.8 M10,3.8 L11.5,1.8 M13.5,3.8 L15,1.8" stroke="#fff" stroke-width="1.1"/><path d="M3.5,8 L15,8 M3.5,10.8 L15,10.8 M3.5,13.6 L15,13.6" stroke="#fff" stroke-width="1.5"/></svg><div style="position:absolute;left:471.7px;top:513.16px;font-size:14.7px;line-height:14.7px;color:#3a383c;font-weight:bold;letter-spacing:0.05px;white-space:nowrap;">Northern Lights Scene</div><svg style="position:absolute;left:448px;top:545.5px;" width="12" height="7.5" viewBox="0 0 12 7.5"><path d="M1,1 L6.0,6.5 L11,1" fill="none" stroke="#58565a" stroke-width="1.5" stroke-linecap="round" stroke-linejoin="round"/></svg><svg style="position:absolute;left:467.3px;top:539px;" width="20" height="20" viewBox="0 0 20 20"><circle cx="10" cy="10" r="9.8" fill="#fdb300"/><path d="M5.5,6.5 L14.5,6.5 M4.5,9.1 L15.5,9.1 M4.5,11.7 L15.5,11.7 M5.5,14.3 L14.5,14.3" stroke="#fff" stroke-width="1.5"/></svg><div style="position:absolute;left:492.3px;top:542.16px;font-size:14.7px;line-height:14.7px;color:#262428;font-weight:normal;letter-spacing:0.34px;white-space:nowrap;">Northern Lights</div><svg style="position:absolute;left:469px;top:568.8px;" width="12" height="7.5" viewBox="0 0 12 7.5"><path d="M1,1 L6.0,6.5 L11,1" fill="none" stroke="#58565a" stroke-width="1.5" stroke-linecap="round" stroke-linejoin="round"/></svg><svg style="position:absolute;left:488px;top:562.3px;" width="20.5" height="20.5" viewBox="0 0 20.5 20.5"><rect x="0.5" y="0.5" width="19.5" height="19.5" fill="#f2f2f2" stroke="#9a9a9a" stroke-width="1.2"/><path d="M20,0.5 L20,20 L0.5,20" fill="none" stroke="#8a8a8a" stroke-width="2"/><path d="M3,4.5 L17.5,4.5 M3,8.5 L17.5,8.5 M3,12.5 L17.5,12.5 M3,16.2 L17.5,16.2" stroke="#a8a8a8" stroke-width="1.6"/></svg><div style="position:absolute;left:513px;top:565.16px;font-size:14.7px;line-height:14.7px;color:#262428;font-weight:normal;letter-spacing:0.17px;white-space:nowrap;">Table View</div><div style="position:absolute;left:423px;top:584.4px;width:350.5px;height:22.8px;background:#0b5fdc"></div><svg style="position:absolute;left:492.8px;top:590.5px;" width="8" height="12" viewBox="0 0 8 12"><path d="M1,1 L7,6.0 L1,11" fill="none" stroke="#ffffff" stroke-width="1.7" stroke-linecap="round" stroke-linejoin="round"/></svg><svg style="position:absolute;left:509px;top:585.5px;" width="20.5" height="20.5" viewBox="0 0 20.5 20.5"><rect x="0.5" y="0.5" width="19.5" height="19.5" fill="#f2f2f2" stroke="#9a9a9a" stroke-width="1.2"/><path d="M20,0.5 L20,20 L0.5,20" fill="none" stroke="#8a8a8a" stroke-width="2"/><path d="M3,4.5 L17.5,4.5 M3,8.5 L17.5,8.5 M3,12.5 L17.5,12.5 M3,16.2 L17.5,16.2" stroke="#a8a8a8" stroke-width="1.6"/></svg><div style="position:absolute;left:533.3px;top:588.76px;font-size:14.7px;line-height:14.7px;color:#ffffff;font-weight:bold;letter-spacing:0.05px;white-space:nowrap;">Post Cell</div><svg style="position:absolute;left:472.5px;top:614px;" width="8" height="12" viewBox="0 0 8 12"><path d="M1,1 L7,6.0 L1,11" fill="none" stroke="#58565a" stroke-width="1.5" stroke-linecap="round" stroke-linejoin="round"/></svg><svg style="position:absolute;left:488px;top:609.3px;" width="20.5" height="20.5" viewBox="0 0 20.5 20.5"><rect x="0.6" y="0.6" width="19.3" height="19.3" fill="#fff" stroke="#8a8a8a" stroke-width="1.2"/><path d="M12,5.5 L8,10.25 L12,15" fill="none" stroke="#1a73f0" stroke-width="1.5"/></svg><div style="position:absolute;left:513px;top:612.46px;font-size:14.7px;line-height:14.7px;color:#262428;font-weight:normal;letter-spacing:0.34px;white-space:nowrap;">Northern Lights</div><svg style="position:absolute;left:468px;top:633px;" width="18.5" height="20" viewBox="0 0 18.5 20"><path d="M9.25,0.5 L18,5 L18,15 L9.25,19.5 L0.5,15 L0.5,5 Z" fill="#f39a2c"/><path d="M0.5,5 L9.25,9.5 L18,5 M9.25,9.5 L9.25,19.5" fill="none" stroke="#f7c07a" stroke-width="0.8"/><text x="3" y="15" font-size="6" font-family="Liberation Sans" font-weight="bold" fill="#fff">0</text><text x="11" y="15" font-size="6" font-family="Liberation Sans" font-weight="bold" fill="#fff">1</text></svg><div style="position:absolute;left:492px;top:636.16px;font-size:14.7px;line-height:14.7px;color:#262428;font-weight:normal;letter-spacing:0.2px;white-space:nowrap;">First Responder</div><svg style="position:absolute;left:467px;top:656.2px;" width="21" height="20.5" viewBox="0 0 21 20.5"><rect x="0" y="0" width="21" height="20.5" fill="#f39a2c"/><path d="M12,4.5 L5,4.5 L5,16 L12,16" fill="none" stroke="#fff" stroke-width="1.5"/><path d="M8.5,10.25 L16,10.25 M13.5,7.5 L16.3,10.25 L13.5,13" fill="none" stroke="#fff" stroke-width="1.5"/></svg><div style="position:absolute;left:492px;top:659.46px;font-size:14.7px;line-height:14.7px;color:#262428;font-weight:normal;letter-spacing:0.2px;white-space:nowrap;">Exit</div><svg style="position:absolute;left:467px;top:681px;" width="18" height="18" viewBox="0 0 18 18"><circle cx="9" cy="9" r="8.4" fill="none" stroke="#9a9a9a" stroke-width="1.2"/><rect x="6" y="4.8" width="6" height="8.4" rx="1" fill="none" stroke="#9a9a9a" stroke-width="1.1"/></svg><div style="position:absolute;left:489.5px;top:683.06px;font-size:14.7px;line-height:14.7px;color:#262428;font-weight:normal;letter-spacing:0.1px;white-space:nowrap;">Present Modally segue to “Navigat...</div><div style="position:absolute;left:435.5px;top:706.8px;width:325px;height:1.5px;background:#cdcdcd"></div><svg style="position:absolute;left:430px;top:718.3px;" width="8" height="12" viewBox="0 0 8 12"><path d="M1,1 L7,6.0 L1,11" fill="none" stroke="#58565a" stroke-width="1.5" stroke-linecap="round" stroke-linejoin="round"/></svg><svg style="position:absolute;left:447.3px;top:714.6px;" width="18.5" height="18.5" viewBox="0 0 18.5 18.5"><rect x="0.5" y="0.5" width="17.5" height="17.5" rx="3" fill="#fdb300"/><path d="M3,3.8 L4.5,1.8 M6.5,3.8 L8,1.8 M10,3.8 L11.5,1.8 M13.5,3.8 L15,1.8" stroke="#fff" stroke-width="1.1"/><path d="M6.5,8 L15,8 Q16,8 16,9 L16,14 Q16,15 15,15 L6.5,15 L3.5,11.5 Z" fill="#fff"/></svg><div style="position:absolute;left:471.7px;top:716.96px;font-size:14.7px;line-height:14.7px;color:#3a383c;font-weight:bold;letter-spacing:0.05px;white-space:nowrap;">Navigation Controller Scene</div><div style="position:absolute;left:429.4px;top:876.6px;width:335.6px;height:28.1px;background:#efefef;border:1px solid #d6d6d6;border-radius:9px;box-sizing:border-box"></div><svg style="position:absolute;left:435.5px;top:882px;" width="17.5" height="17.5" viewBox="0 0 17.5 17.5"><circle cx="8.75" cy="8.75" r="7.9" fill="none" stroke="#1e1e1e" stroke-width="1.4"/><path d="M4.8,6.6 L12.7,6.6 M6.2,9.2 L11.3,9.2 M7.6,11.8 L9.9,11.8" stroke="#1e1e1e" stroke-width="1.3"/></svg><div style="position:absolute;left:458.4px;top:882.88px;font-size:15.5px;line-height:15.5px;color:#c2c2c2;font-weight:normal;letter-spacing:0.2px;white-space:nowrap;">Filter</div><svg style="position:absolute;left:437.5px;top:921.5px;" width="19.5" height="11.5" viewBox="0 0 19.5 11.5"><path d="M0,2 Q0,0 2,0 L14.5,0 L19.3,5.75 L14.5,11.5 L2,11.5 Q0,11.5 0,9.5 Z" fill="#1a7cf5"/></svg><svg style="position:absolute;left:1479.5px;top:919px;" width="18" height="17" viewBox="0 0 18 17"><rect x="0.8" y="0.8" width="16.4" height="15.4" rx="3" fill="none" stroke="#6a6a6a" stroke-width="1.3"/><rect x="3.5" y="10" width="11" height="3" fill="#6a6a6a"/></svg><svg style="position:absolute;left:434px;top:163px;" width="16.5" height="16.5" viewBox="0 0 19 19"><rect x="0.5" y="0.5" width="18" height="18" rx="4.5" fill="#3b8ffc"/><rect x="2.5" y="2.5" width="14" height="14" rx="2.5" fill="#1673f5" stroke="#7fb6ff" stroke-width="0.8"/><g stroke="#fff" stroke-width="1.3" stroke-linecap="round" fill="none"><path d="M9.5,4.5 L5,14"/><path d="M9.5,4.5 L14,14"/><path d="M4,11.5 L15,11.5"/><path d="M5,14 L4,15.2 M14,14 L15,15.2"/></g></svg><div style="position:absolute;left:458px;top:163.96px;font-size:14.7px;line-height:14.7px;color:#262428;font-weight:normal;letter-spacing:0.06px;white-space:nowrap;">FirebaseDemo</div><svg style="position:absolute;left:560.5px;top:161.5px;" width="8" height="19" viewBox="0 0 8 19"><path d="M1.2,1 L6.5,9.5 L1.2,18" fill="none" stroke="#6a676c" stroke-width="1.2"/></svg><svg style="position:absolute;left:575px;top:164px;" width="16.5" height="13.5" preserveAspectRatio="none" viewBox="0 0 19 16"><path d="M1.5,3 Q1.5,0.5 4,0.5 L7,0.5 Q8.2,0.5 9,1.8 L9.6,2.4 L16.5,2.4 Q18.5,2.4 18.5,4.5 L18.5,4.9 L1.5,4.9 Z" fill="#7b7f87"/><path d="M1.5,6.3 L18.5,6.3 L18.5,13.5 Q18.5,15.5 16.5,15.5 L3.5,15.5 Q1.5,15.5 1.5,13.5 Z" fill="#7b7f87"/></svg><div style="position:absolute;left:598.5px;top:163.96px;font-size:14.7px;line-height:14.7px;color:#262428;font-weight:normal;letter-spacing:0.12px;white-space:nowrap;">FirebaseDemo</div><svg style="position:absolute;left:701.5px;top:161.5px;" width="8" height="19" viewBox="0 0 8 19"><path d="M1.2,1 L6.5,9.5 L1.2,18" fill="none" stroke="#6a676c" stroke-width="1.2"/></svg><svg style="position:absolute;left:716px;top:163.5px;" width="15" height="15" viewBox="0 0 17 17"><path d="M1.8,1.8 L9.6,9.6" stroke="#f5a623" stroke-width="2" stroke-linecap="round"/><path d="M15.2,1.8 L2.2,15" stroke="#f5a623" stroke-width="2.2" stroke-linecap="round"/><path d="M13.2,0.8 L16.2,3.8" stroke="#f5a623" stroke-width="1.2"/><ellipse cx="12.3" cy="12.6" rx="3.6" ry="2.3" transform="rotate(45 12.3 12.6)" fill="#f5a623"/><path d="M10,10.5 L11.3,11.8" stroke="#fff" stroke-width="0.9"/></svg><div style="position:absolute;left:739.5px;top:163.96px;font-size:14.7px;line-height:14.7px;color:#262428;font-weight:normal;letter-spacing:0.12px;white-space:nowrap;">Main</div><svg style="position:absolute;left:776.5px;top:161.5px;" width="8" height="19" viewBox="0 0 8 19"><path d="M1.2,1 L6.5,9.5 L1.2,18" fill="none" stroke="#6a676c" stroke-width="1.2"/></svg><svg style="position:absolute;left:791.5px;top:163.5px;" width="15" height="15" viewBox="0 0 17 17"><path d="M1.8,1.8 L9.6,9.6" stroke="#f5a623" stroke-width="2" stroke-linecap="round"/><path d="M15.2,1.8 L2.2,15" stroke="#f5a623" stroke-width="2.2" stroke-linecap="round"/><path d="M13.2,0.8 L16.2,3.8" stroke="#f5a623" stroke-width="1.2"/><ellipse cx="12.3" cy="12.6" rx="3.6" ry="2.3" transform="rotate(45 12.3 12.6)" fill="#f5a623"/><path d="M10,10.5 L11.3,11.8" stroke="#fff" stroke-width="0.9"/></svg><div style="position:absolute;left:815px;top:163.96px;font-size:14.7px;line-height:14.7px;color:#262428;font-weight:normal;letter-spacing:0.12px;white-space:nowrap;">Main (Base)</div><svg style="position:absolute;left:900.5px;top:161.5px;" width="8" height="19" viewBox="0 0 8 19"><path d="M1.2,1 L6.5,9.5 L1.2,18" fill="none" stroke="#6a676c" stroke-width="1.2"/></svg><svg style="position:absolute;left:914px;top:162.2px;" width="18.5" height="18.5" viewBox="0 0 18.5 18.5"><rect x="0.5" y="0.5" width="17.5" height="17.5" rx="3" fill="#fdb300"/><path d="M3,3.8 L4.5,1.8 M6.5,3.8 L8,1.8 M10,3.8 L11.5,1.8 M13.5,3.8 L15,1.8" stroke="#fff" stroke-width="1.1"/><path d="M3.5,8 L15,8 M3.5,10.8 L15,10.8 M3.5,13.6 L15,13.6" stroke="#fff" stroke-width="1.5"/></svg><div style="position:absolute;left:939px;top:163.96px;font-size:14.7px;line-height:14.7px;color:#262428;font-weight:normal;letter-spacing:0.24px;white-space:nowrap;">Northern...ts Scene</div><svg style="position:absolute;left:1073.5px;top:161.5px;" width="8" height="19" viewBox="0 0 8 19"><path d="M1.2,1 L6.5,9.5 L1.2,18" fill="none" stroke="#6a676c" stroke-width="1.2"/></svg><svg style="position:absolute;left:1086.5px;top:161.2px;" width="20" height="20" viewBox="0 0 20 20"><circle cx="10" cy="10" r="9.8" fill="#fdb300"/><path d="M5.5,6.5 L14.5,6.5 M4.5,9.1 L15.5,9.1 M4.5,11.7 L15.5,11.7 M5.5,14.3 L14.5,14.3" stroke="#fff" stroke-width="1.5"/></svg><div style="position:absolute;left:1112.5px;top:163.96px;font-size:14.7px;line-height:14.7px;color:#262428;font-weight:normal;letter-spacing:0.34px;white-space:nowrap;">Northern Lights</div><svg style="position:absolute;left:1223.5px;top:161.5px;" width="8" height="19" viewBox="0 0 8 19"><path d="M1.2,1 L6.5,9.5 L1.2,18" fill="none" stroke="#6a676c" stroke-width="1.2"/></svg><svg style="position:absolute;left:1237.5px;top:161.5px;" width="19" height="19" viewBox="0 0 20.5 20.5"><rect x="0.5" y="0.5" width="19.5" height="19.5" fill="#f2f2f2" stroke="#9a9a9a" stroke-width="1.2"/><path d="M20,0.5 L20,20 L0.5,20" fill="none" stroke="#8a8a8a" stroke-width="2"/><path d="M3,4.5 L17.5,4.5 M3,8.5 L17.5,8.5 M3,12.5 L17.5,12.5 M3,16.2 L17.5,16.2" stroke="#a8a8a8" stroke-width="1.6"/></svg><div style="position:absolute;left:1262.5px;top:163.96px;font-size:14.7px;line-height:14.7px;color:#262428;font-weight:normal;letter-spacing:0.17px;white-space:nowrap;">Table View</div><svg style="position:absolute;left:1339.5px;top:161.5px;" width="8" height="19" viewBox="0 0 8 19"><path d="M1.2,1 L6.5,9.5 L1.2,18" fill="none" stroke="#6a676c" stroke-width="1.2"/></svg><svg style="position:absolute;left:1352.5px;top:161.5px;" width="19" height="19" viewBox="0 0 20.5 20.5"><rect x="0.5" y="0.5" width="19.5" height="19.5" fill="#f2f2f2" stroke="#9a9a9a" stroke-width="1.2"/><path d="M20,0.5 L20,20 L0.5,20" fill="none" stroke="#8a8a8a" stroke-width="2"/><path d="M3,4.5 L17.5,4.5 M3,8.5 L17.5,8.5 M3,12.5 L17.5,12.5 M3,16.2 L17.5,16.2" stroke="#a8a8a8" stroke-width="1.6"/></svg><div style="position:absolute;left:1378.5px;top:163.96px;font-size:14.7px;line-height:14.7px;color:#262428;font-weight:normal;letter-spacing:0.17px;white-space:nowrap;">Post Cell</div><div style="position:absolute;left:1440px;top:154px;width:73px;height:35px;background:#ffffff"></div><svg style="position:absolute;left:1452.5px;top:163px;" width="10" height="16" viewBox="0 0 10 16"><path d="M8.5,1 L1.5,8 L8.5,15" fill="none" stroke="#4a484c" stroke-width="1.3"/></svg><svg style="position:absolute;left:1470.5px;top:164px;" width="15" height="14" viewBox="0 0 15 14"><path d="M7.5,1 L14.2,13 L0.8,13 Z" fill="#f5b400" stroke="#f5b400" stroke-width="1.2" stroke-linejoin="round"/><path d="M7.5,4.5 L7.5,8.8" stroke="#fff" stroke-width="1.6" stroke-linecap="round"/><circle cx="7.5" cy="11" r="0.9" fill="#fff"/></svg><svg style="position:absolute;left:1492px;top:163px;" width="10" height="16" viewBox="0 0 10 16"><path d="M1.5,1 L8.5,8 L1.5,15" fill="none" stroke="#4a484c" stroke-width="1.3"/></svg><div style="position:absolute;left:1524px;top:161.07px;font-size:16.1px;line-height:16.1px;color:#6f6c72;font-weight:bold;letter-spacing:0.15px;white-space:nowrap;">Custom Class</div><div style="position:absolute;right:302px;top:198.49px;font-size:13.6px;line-height:13.6px;color:#2a282c;font-weight:normal;letter-spacing:0.22px;white-space:nowrap;">Class</div><div style="position:absolute;left:1625px;top:192.3px;width:219px;height:21.399999999999977px;background:#fff;border-radius:6px;box-shadow:0 0 0 0.5px rgba(0,0,0,0.12),0 1px 1.5px rgba(0,0,0,0.18)"></div><div style="position:absolute;left:1629.6px;top:196.16px;font-size:14.7px;line-height:14.7px;color:#222024;font-weight:normal;letter-spacing:0.05px;white-space:nowrap;">PostCell</div><svg style="position:absolute;left:1805.4px;top:196px;" width="13" height="13" viewBox="0 0 13 13"><circle cx="6.5" cy="6.5" r="6.4" fill="#707070"/><path d="M3.2,6.5 L9.6,6.5 M6.8,3.7 L9.6,6.5 L6.8,9.3" fill="none" stroke="#fff" stroke-width="1.3"/></svg><svg style="position:absolute;left:1826.2px;top:195.2px;" width="15.2" height="15.2" viewBox="0 0 15.2 15.2"><rect x="0" y="0" width="15.2" height="15.2" rx="3.5" fill="#1b7ef6"/><path d="M4.6,6.3 L7.6,9.2 L10.6,6.3" fill="none" stroke="#fff" stroke-width="1.5"/></svg><div style="position:absolute;right:302px;top:226.09px;font-size:13.6px;line-height:13.6px;color:#2a282c;font-weight:normal;letter-spacing:0.22px;white-space:nowrap;">Module</div><div style="position:absolute;left:1625px;top:221px;width:219px;height:21.5px;background:#fff;border-radius:6px;box-shadow:0 0 0 0.5px rgba(0,0,0,0.12),0 1px 1.5px rgba(0,0,0,0.18)"></div><div style="position:absolute;left:1629.6px;top:224.56px;font-size:14.7px;line-height:14.7px;color:#b9b7ba;font-weight:normal;letter-spacing:0.06px;white-space:nowrap;">FirebaseDemo</div><svg style="position:absolute;left:1826.2px;top:224px;" width="15.2" height="15.2" viewBox="0 0 15.2 15.2"><rect x="0" y="0" width="15.2" height="15.2" rx="3.5" fill="#1b7ef6"/><path d="M4.6,6.3 L7.6,9.2 L10.6,6.3" fill="none" stroke="#fff" stroke-width="1.5"/></svg><svg style="position:absolute;left:1624.2px;top:252px;" width="15.5" height="15.5" viewBox="0 0 15.5 15.5"><rect x="0" y="0" width="15.5" height="15.5" rx="3.5" fill="#1b7ef6"/><path d="M3.6,7.8 L6.4,10.8 L11.8,4.2" fill="none" stroke="#fff" stroke-width="1.9" stroke-linecap="round" stroke-linejoin="round"/></svg><div style="position:absolute;left:1645.5px;top:252.36px;font-size:14.7px;line-height:14.7px;color:#222024;font-weight:normal;letter-spacing:0.28px;white-space:nowrap;">Inherit Module From Target</div><div style="position:absolute;left:1525px;top:287px;width:318px;height:1px;background:#d9d4da"></div><div style="position:absolute;left:1524px;top:296.97px;font-size:16.1px;line-height:16.1px;color:#6f6c72;font-weight:bold;letter-spacing:0.15px;white-space:nowrap;">Identity</div><div style="position:absolute;right:302px;top:334.19px;font-size:13.6px;line-height:13.6px;color:#2a282c;font-weight:normal;letter-spacing:0.22px;white-space:nowrap;">Restoration ID</div><div style="position:absolute;left:1625px;top:330px;width:218.5px;height:21.399999999999977px;background:#fff;box-shadow:0 0 0 0.6px rgba(0,0,0,0.1),0 1px 0.8px rgba(0,0,0,0.2)"></div><div style="position:absolute;left:1525px;top:368.5px;width:318px;height:1px;background:#d9d4da"></div><div style="position:absolute;left:1524px;top:377.37px;font-size:16.1px;line-height:16.1px;color:#6f6c72;font-weight:bold;letter-spacing:0.15px;white-space:nowrap;">User Defined Runtime Attributes</div><div style="position:absolute;left:1525.4px;top:403.6px;width:317.6px;height:125.3px;background:#fff;border:1px solid #c4c4c4;box-sizing:border-box"></div><div style="position:absolute;left:1526.4px;top:439.5px;width:315.6px;height:1px;background:#e6e6e6"></div><div style="position:absolute;left:1639.5px;top:412px;width:1px;height:20px;background:#dddddd"></div><div style="position:absolute;left:1724.3px;top:412px;width:1px;height:20px;background:#dddddd"></div><div style="position:absolute;left:1539.7px;top:415.53px;font-size:14.5px;line-height:14.5px;color:#222024;font-weight:normal;letter-spacing:0.0px;white-space:nowrap;">Key Path</div><div style="position:absolute;left:1647.7px;top:415.53px;font-size:14.5px;line-height:14.5px;color:#222024;font-weight:normal;letter-spacing:0.0px;white-space:nowrap;">Type</div><div style="position:absolute;left:1732.4px;top:415.53px;font-size:14.5px;line-height:14.5px;color:#222024;font-weight:normal;letter-spacing:0.0px;white-space:nowrap;">Value</div><svg style="position:absolute;left:1532.5px;top:510.5px;" width="14" height="14" viewBox="0 0 14 14"><path d="M7,0.5 L7,13.5 M0.5,7 L13.5,7" stroke="#3a383c" stroke-width="1.3"/></svg><div style="position:absolute;left:1558.7px;top:516.8px;width:13.6px;height:1.2px;background:#c8c8c8"></div><div style="position:absolute;left:1525px;top:540px;width:318px;height:1px;background:#d9d4da"></div><div style="position:absolute;left:1524px;top:550.07px;font-size:16.1px;line-height:16.1px;color:#6f6c72;font-weight:bold;letter-spacing:0.15px;white-space:nowrap;">Document</div><div style="position:absolute;right:302px;top:587.29px;font-size:13.6px;line-height:13.6px;color:#2a282c;font-weight:normal;letter-spacing:0.22px;white-space:nowrap;">Label</div><div style="position:absolute;left:1625px;top:582.7px;width:218.5px;height:21.5px;background:#fff;box-shadow:0 0 0 0.6px rgba(0,0,0,0.1),0 1px 0.8px rgba(0,0,0,0.2)"></div><div style="position:absolute;left:1629.6px;top:586.16px;font-size:14.7px;line-height:14.7px;color:#b9b7ba;font-weight:normal;letter-spacing:0.26px;white-space:nowrap;">Xcode Specific Label</div><svg style="position:absolute;left:1628px;top:616.5px;" width="10" height="10" viewBox="0 0 10 10"><path d="M1,1 L9,9 M9,1 L1,9" stroke="#222" stroke-width="1.5"/></svg><div style="position:absolute;left:1648.4px;top:616.1px;width:11px;height:11px;background:#f4a3a0;border-radius:2px;box-shadow:0 0.5px 1px rgba(0,0,0,0.25)"></div><div style="position:absolute;left:1671.8500000000001px;top:616.1px;width:11px;height:11px;background:#f7c88f;border-radius:2px;box-shadow:0 0.5px 1px rgba(0,0,0,0.25)"></div><div style="position:absolute;left:1695.3000000000002px;top:616.1px;width:11px;height:11px;background:#f5e58e;border-radius:2px;box-shadow:0 0.5px 1px rgba(0,0,0,0.25)"></div><div style="position:absolute;left:1718.75px;top:616.1px;width:11px;height:11px;background:#c9e591;border-radius:2px;box-shadow:0 0.5px 1px rgba(0,0,0,0.25)"></div><div style="position:absolute;left:1742.2px;top:616.1px;width:11px;height:11px;background:#93c9f6;border-radius:2px;box-shadow:0 0.5px 1px rgba(0,0,0,0.25)"></div><div style="position:absolute;left:1765.65px;top:616.1px;width:11px;height:11px;background:#d9bff1;border-radius:2px;box-shadow:0 0.5px 1px rgba(0,0,0,0.25)"></div><div style="position:absolute;left:1789.1000000000001px;top:616.1px;width:11px;height:11px;background:#cccccc;border-radius:2px;box-shadow:0 0.5px 1px rgba(0,0,0,0.25)"></div><div style="position:absolute;right:302px;top:641.99px;font-size:13.6px;line-height:13.6px;color:#2a282c;font-weight:normal;letter-spacing:0.22px;white-space:nowrap;">Object ID</div><div style="position:absolute;left:1626.7px;top:640.86px;font-size:14.7px;line-height:14.7px;color:#222024;font-weight:normal;letter-spacing:0.4px;white-space:nowrap;">jw2-i1-fbY</div><div style="position:absolute;right:302px;top:667.79px;font-size:13.6px;line-height:13.6px;color:#2a282c;font-weight:normal;letter-spacing:0.22px;white-space:nowrap;">Lock</div><div style="position:absolute;left:1625px;top:664.1px;width:219px;height:20.799999999999955px;background:#fff;border-radius:6px;box-shadow:0 0 0 0.5px rgba(0,0,0,0.12),0 1px 1.5px rgba(0,0,0,0.18)"></div><div style="position:absolute;left:1633.6px;top:666.76px;font-size:14.7px;line-height:14.7px;color:#222024;font-weight:normal;letter-spacing:0.42px;white-space:nowrap;">Inherited - (Nothing)</div><svg style="position:absolute;left:1826.2px;top:667px;" width="15.2" height="15.2" viewBox="0 0 15.2 15.2"><rect x="0" y="0" width="15.2" height="15.2" rx="3.5" fill="#1b7ef6"/><path d="M5,6 L7.6,3.6 L10.2,6 M5,9.4 L7.6,11.8 L10.2,9.4" fill="none" stroke="#fff" stroke-width="1.4"/></svg><div style="position:absolute;right:302px;top:697.49px;font-size:13.6px;line-height:13.6px;color:#2a282c;font-weight:normal;letter-spacing:0.22px;white-space:nowrap;">Localizer Hint</div><div style="position:absolute;left:1625px;top:693.8px;width:218.5px;height:21.40000000000009px;background:#fff;box-shadow:0 0 0 0.6px rgba(0,0,0,0.1),0 1px 0.8px rgba(0,0,0,0.2)"></div><div style="position:absolute;left:1629.6px;top:696.36px;font-size:14.7px;line-height:14.7px;color:#b9b7ba;font-weight:normal;letter-spacing:0.17px;white-space:nowrap;">Comment For Localizer</div><div style="position:absolute;left:1525px;top:731.5px;width:318px;height:1px;background:#d9d4da"></div><div style="position:absolute;left:1524px;top:741.87px;font-size:16.1px;line-height:16.1px;color:#6f6c72;font-weight:bold;letter-spacing:0.15px;white-space:nowrap;">Accessibility</div><div style="position:absolute;right:302px;top:774.89px;font-size:13.6px;line-height:13.6px;color:#2a282c;font-weight:normal;letter-spacing:0.22px;white-space:nowrap;">Accessibility</div><div style="position:absolute;left:1625.4px;top:773.6px;width:15.5px;height:15.5px;background:#fff;border-radius:3.5px;box-shadow:0 0 0 0.6px rgba(0,0,0,0.2),0 0.6px 1px rgba(0,0,0,0.15)"></div><div style="position:absolute;left:1646.4px;top:773.96px;font-size:14.7px;line-height:14.7px;color:#222024;font-weight:normal;letter-spacing:0.0px;white-space:nowrap;">Enabled</div><div style="position:absolute;right:302px;top:802.49px;font-size:13.6px;line-height:13.6px;color:#2a282c;font-weight:normal;letter-spacing:0.22px;white-space:nowrap;">Label</div><div style="position:absolute;left:1625px;top:798px;width:218.5px;height:21.5px;background:#fff;box-shadow:0 0 0 0.6px rgba(0,0,0,0.1),0 1px 0.8px rgba(0,0,0,0.2)"></div><div style="position:absolute;left:1629.6px;top:801.36px;font-size:14.7px;line-height:14.7px;color:#b9b7ba;font-weight:normal;letter-spacing:0.1px;white-space:nowrap;">Label</div><div style="position:absolute;right:302px;top:832.19px;font-size:13.6px;line-height:13.6px;color:#2a282c;font-weight:normal;letter-spacing:0.22px;white-space:nowrap;">Hint</div><div style="position:absolute;left:1625px;top:827.7px;width:218.5px;height:21.5px;background:#fff;box-shadow:0 0 0 0.6px rgba(0,0,0,0.1),0 1px 0.8px rgba(0,0,0,0.2)"></div><div style="position:absolute;left:1629.6px;top:831.06px;font-size:14.7px;line-height:14.7px;color:#b9b7ba;font-weight:normal;letter-spacing:0.1px;white-space:nowrap;">Hint</div><div style="position:absolute;right:302px;top:862.49px;font-size:13.6px;line-height:13.6px;color:#2a282c;font-weight:normal;letter-spacing:0.22px;white-space:nowrap;">Identifier</div><div style="position:absolute;left:1625px;top:857.8px;width:218.5px;height:21.200000000000045px;background:#fff;box-shadow:0 0 0 0.6px rgba(0,0,0,0.1),0 1px 0.8px rgba(0,0,0,0.2)"></div><div style="position:absolute;left:1629.6px;top:861.36px;font-size:14.7px;line-height:14.7px;color:#b9b7ba;font-weight:normal;letter-spacing:0.1px;white-space:nowrap;">Identifier</div><div style="position:absolute;left:1525px;top:886px;width:318px;height:1px;background:#d9d4da"></div><div style="position:absolute;right:302px;top:894.79px;font-size:13.6px;line-height:13.6px;color:#2a282c;font-weight:normal;letter-spacing:0.22px;white-space:nowrap;">Traits</div><div style="position:absolute;left:1625.5px;top:893.7px;width:15.5px;height:15.5px;background:#fff;border-radius:3.5px;box-shadow:0 0 0 0.6px rgba(0,0,0,0.2),0 0.6px 1px rgba(0,0,0,0.15)"></div><div style="position:absolute;left:1646.3px;top:893.86px;font-size:14.7px;line-height:14.7px;color:#222024;font-weight:normal;letter-spacing:0.05px;white-space:nowrap;">Button</div><div style="position:absolute;left:1740px;top:893.7px;width:15.5px;height:15.5px;background:#fff;border-radius:3.5px;box-shadow:0 0 0 0.6px rgba(0,0,0,0.2),0 0.6px 1px rgba(0,0,0,0.15)"></div><div style="position:absolute;left:1761.3px;top:893.86px;font-size:14.7px;line-height:14.7px;color:#222024;font-weight:normal;letter-spacing:0.05px;white-space:nowrap;">Link</div><div style="position:absolute;left:1625.5px;top:917.2px;width:15.5px;height:15.5px;background:#fff;border-radius:3.5px;box-shadow:0 0 0 0.6px rgba(0,0,0,0.2),0 0.6px 1px rgba(0,0,0,0.15)"></div><div style="position:absolute;left:1646.3px;top:917.36px;font-size:14.7px;line-height:14.7px;color:#222024;font-weight:normal;letter-spacing:0.05px;white-space:nowrap;">Image</div><div style="position:absolute;left:1740px;top:917.2px;width:15.5px;height:15.5px;background:#fff;border-radius:3.5px;box-shadow:0 0 0 0.6px rgba(0,0,0,0.2),0 0.6px 1px rgba(0,0,0,0.15)"></div><div style="position:absolute;left:1761.3px;top:917.36px;font-size:14.7px;line-height:14.7px;color:#222024;font-weight:normal;letter-spacing:0.05px;white-space:nowrap;">Selected</div><div style="position:absolute;left:1625.5px;top:940.2px;width:15.5px;height:15.5px;background:#fff;border-radius:3.5px;box-shadow:0 0 0 0.6px rgba(0,0,0,0.2),0 0.6px 1px rgba(0,0,0,0.15)"></div><div style="position:absolute;left:1646.3px;top:940.36px;font-size:14.7px;line-height:14.7px;color:#222024;font-weight:normal;letter-spacing:0.05px;white-space:nowrap;">Static Text</div></div><div style="position:absolute;left:65px;top:65px;width:1788px;height:879px;border:1px solid rgb(225,110,240);border-radius:14px;mix-blend-mode:color-burn"></div><div style="position:absolute;left:66px;top:66px;width:1788px;height:879px;border-radius:13px;box-shadow:inset 0 0 0 1px rgba(255,255,255,0.45)"></div>
</body></html>
